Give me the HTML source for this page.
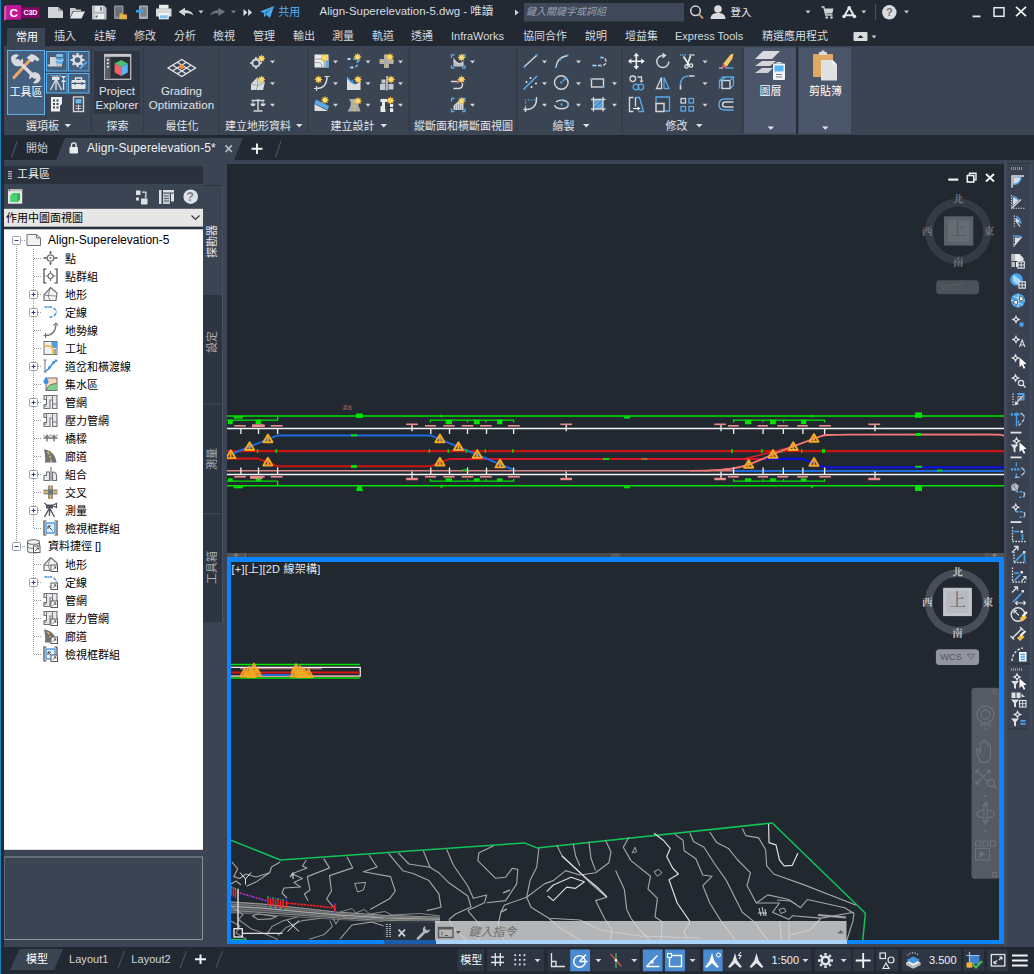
<!DOCTYPE html>
<html lang="zh-Hant">
<head>
<meta charset="utf-8">
<title>Align-Superelevation-5.dwg</title>
<style>
*{box-sizing:border-box;margin:0;padding:0}
html,body{width:1034px;height:974px;overflow:hidden;background:#3b4453}
body{position:relative;font-family:"Liberation Sans","Noto Sans CJK TC",sans-serif;font-size:12px;color:#e4e7eb;line-height:1}
.abs{position:absolute}
svg{position:absolute;overflow:visible}
/* ---------- title bar ---------- */
#title{position:absolute;left:0;top:0;width:1034px;height:25px;background:#222933}
#menutabs{position:absolute;left:0;top:25px;width:1034px;height:22px;background:#222933}
#menutabs span{position:absolute;top:6px;white-space:nowrap;color:#d5d9df;font-size:11px}
#menutabs .act{left:7px;top:3px;width:38px;height:19px;background:#3b4453;color:#fff}
/* ---------- ribbon ---------- */
#ribbon{position:absolute;left:0;top:46px;width:1034px;height:89px;background:#3b4453}
.rt{position:absolute;font-size:11px;color:#e1e4e9;white-space:nowrap;line-height:12px}
/* ---------- doc tabs ---------- */
#doctabs{position:absolute;left:0;top:135px;width:1034px;height:25px;background:#222933}
/* ---------- tool space ---------- */
#ts{position:absolute;left:0;top:160px;width:227px;height:787px;background:#3b4453}
.tl{position:absolute;font-size:11px;color:#000;white-space:nowrap;line-height:13px}
.vt{position:absolute;left:205.500px;font-size:11px;color:#aab0b9;white-space:nowrap;transform-origin:0 0;transform:rotate(-90deg);line-height:12px}
/* ---------- viewports ---------- */
#vp1{position:absolute;left:227px;top:164px;width:776.500px;height:389px;background:#212830;overflow:hidden}
#vp2{position:absolute;left:227px;top:557px;width:777px;height:387px;background:#212830;overflow:hidden;border:solid #0a84ff;border-width:5px 5px 4px 4px}
.cl{position:absolute;font-family:"Liberation Serif","Noto Serif CJK SC",serif;font-size:10.500px;font-weight:bold;color:#6d737a;line-height:12px;white-space:nowrap}
/* ---------- right toolbar ---------- */
#rt{position:absolute;left:1004px;top:160px;width:30px;height:787px;background:#3b4453}
/* ---------- status bar ---------- */
#status{position:absolute;left:0;top:947px;width:1034px;height:27px;background:#222933}
#split{position:absolute;left:227px;top:552.500px;width:776.500px;height:4.500px;background:#4a4949}
#cmdstrip{position:absolute;left:383.500px;top:940px;width:463px;height:4px;background:linear-gradient(90deg,#1c5cae 0,#1c5cae 51.500px,#a9d3f9 51.500px,#a9d3f9 100%)}
#ledge{position:absolute;left:0;top:0;width:3.600px;height:974px;background:linear-gradient(90deg,#1583bd 0,#1583bd 1.200px,#222933 1.200px,#222933 100%)}
</style>
</head>
<body>
<div id="title">
<svg width="1034" height="25" viewBox="0 0 1034 25">
<!-- logo -->
<polygon points="3.100,7.300 6.800,5.100 6.800,19.400 3.100,21" fill="#d94cb2"/>
<rect x="6.800" y="5.100" width="14.500" height="14.500" fill="#c5149a"/>
<rect x="21.300" y="7.300" width="18.100" height="10.600" fill="#870768"/>
<text x="13.800" y="16.900" font-size="11.800" font-weight="bold" fill="#fff" text-anchor="middle" font-family="Liberation Sans, sans-serif">C</text>
<text x="30.400" y="15" font-size="7" font-weight="bold" fill="#fff" text-anchor="middle" font-family="Liberation Sans, sans-serif">C3D</text>
<!-- new -->
<path d="M48 7h10l5 4v7H48z" fill="#d2d4d6"/><path d="M58 7v4h5z" fill="#9a9da2"/>
<!-- open -->
<path d="M70 8h5l1.5 1.5H81V11h-8l-3 6.5z" fill="#c8cacd"/><path d="M73.500 11.500H85l-3.500 7H70z" fill="#e4e5e7"/>
<!-- save -->
<path d="M92 5.500h12l2.500 2.500V19.500H92z" fill="#b9bcc0"/><rect x="95" y="6" width="8" height="5.500" fill="#e8e9ea"/><rect x="100" y="7" width="2" height="3.500" fill="#7c8087"/><rect x="94.500" y="14" width="9.500" height="5" fill="#eceded"/><rect x="95.500" y="15.500" width="2" height="2" fill="#555a62"/>
<!-- save mobile -->
<rect x="114" y="5.500" width="9.500" height="13.500" rx="1" fill="#8d9096"/><rect x="115.500" y="7" width="6.500" height="9.500" fill="#6a6e75"/><path d="M119.500 13.500h3l.8.900h3.700v4.800h-7.500z" fill="#e5b04a"/>
<!-- open mobile -->
<rect x="139" y="5.500" width="9" height="13.500" rx="1" fill="#a9acb1"/><rect x="140.300" y="7" width="6.400" height="9.500" fill="#7d8188"/><path d="M136 10h4V8l3.500 3.200L140 14.500v-2h-4z" fill="#3fa0e6"/>
<!-- print -->
<rect x="159" y="4.800" width="9.500" height="4" fill="#eeeeef"/><path d="M156 8.500h15.500v8H156z" fill="#d7d9db"/><rect x="158.800" y="13" width="10" height="6.300" fill="#f4f4f5"/><rect x="160" y="15.300" width="7.600" height="3" fill="#7fc2f2"/>
<!-- undo -->
<path d="M178.500 11.800l6.500-4v2.500c4 0 7.500 1.500 8.300 5.200-2-2-4.500-2.400-8.300-2.200v2.600z" fill="#d4d6d9"/>
<path d="M198.500 10.500h5l-2.500 3z" fill="#c8cbcf"/>
<!-- redo -->
<path d="M225 11.800l-6.500-4v2.500c-4 0-7.500 1.500-8.300 5.200 2-2 4.500-2.400 8.300-2.200v2.600z" fill="#6e737b"/>
<path d="M231 10.500h5l-2.500 3z" fill="#7d828a"/>
<!-- more -->
<path d="M243.500 9l3.800 3.500-3.800 3.500zM248.200 9l3.800 3.500-3.800 3.500z" fill="#e0e2e5"/>
<!-- share -->
<path d="M260 11.500L274 6l-4 12-3.800-3.300-2 2.600-.4-4.300z" fill="#4aa9ea"/><path d="M263.800 13l7.500-5-5 6.500z" fill="#2b7fbf"/>
<!-- arrow before search -->
<path d="M515 9.500l3.800 3-3.800 3z" fill="#d0d3d7"/>
<rect x="524" y="3" width="160" height="18.500" fill="#3f4859"/>
<!-- magnifier -->
<circle cx="695.500" cy="10.800" r="4.800" fill="none" stroke="#d6d8db" stroke-width="1.500"/><path d="M699 14.300l4 4" stroke="#c9a26a" stroke-width="1.800"/>
<!-- user -->
<circle cx="718" cy="9" r="3.800" fill="#d9dbde"/><path d="M710.500 19c0-4.500 3.500-6 7.500-6s7.500 1.500 7.500 6z" fill="#d9dbde"/>
<path d="M805.500 10.500h5l-2.500 3z" fill="#c8cbcf"/>
<!-- cart -->
<path d="M821.500 7h2.300l2 8h6.700" fill="none" stroke="#d0d3d6" stroke-width="1.300"/><path d="M824.500 8.500h9l-1.200 5h-6.600z" fill="#d0d3d6"/><circle cx="826.800" cy="17.500" r="1.300" fill="#d0d3d6"/><circle cx="831.500" cy="17.500" r="1.300" fill="#d0d3d6"/>
<!-- A app -->
<path d="M849.200 7.500l-5.400 9.500M849.200 7.500l5.400 9.500M845 15.200h8.500" stroke="#e3e5e8" stroke-width="2" fill="none"/><circle cx="849.200" cy="7.800" r="1.800" fill="#e3e5e8"/><circle cx="844" cy="16.500" r="1.800" fill="#e3e5e8"/><circle cx="854.500" cy="16.500" r="1.800" fill="#e3e5e8"/>
<path d="M861.300 10.500h5l-2.500 3z" fill="#c8cbcf"/>
<rect x="875" y="4" width="1" height="16" fill="#4a5261"/>
<circle cx="889.300" cy="12.300" r="7.200" fill="#d9dbde"/>
<text x="889.300" y="16.300" font-size="11" font-weight="bold" fill="#6a707a" text-anchor="middle" font-family="Liberation Sans, sans-serif">?</text>
<path d="M904 10.500h5l-2.500 3z" fill="#c8cbcf"/>
<!-- window buttons -->
<rect x="972.500" y="15.500" width="8" height="1.800" fill="#e6e8ea"/>
<rect x="994" y="7.700" width="10" height="8.600" fill="none" stroke="#e6e8ea" stroke-width="1.500"/>
<path d="M1016 6.800l10 9.400M1026 6.800l-10 9.400" stroke="#f2f3f4" stroke-width="1.700"/>
</svg>
<span class="abs" style="left:278.300px;top:6.800px;color:#58aff0;font-size:11px;white-space:nowrap">共用</span>
<span class="abs" style="left:319.500px;top:6px;color:#d9dce1;font-size:11.500px;white-space:nowrap">Align-Superelevation-5.dwg - 唯讀</span>
<span class="abs" style="left:526px;top:7px;color:#98a1ae;font-size:10px;font-style:italic;white-space:nowrap">鍵入關鍵字或詞組</span>
<span class="abs" style="left:730.500px;top:6.500px;color:#e4e6e9;font-size:10.500px;white-space:nowrap">登入</span>
</div>
<div id="menutabs">
<span class="act"><i style="position:absolute;left:9px;top:3.500px;font-style:normal">常用</i></span>
<span style="left:54px">插入</span>
<span style="left:94px">註解</span>
<span style="left:134px">修改</span>
<span style="left:174px">分析</span>
<span style="left:213px">檢視</span>
<span style="left:253px">管理</span>
<span style="left:293px">輸出</span>
<span style="left:332px">測量</span>
<span style="left:372px">軌道</span>
<span style="left:411px">透通</span>
<span style="left:451px">InfraWorks</span>
<span style="left:523px">協同合作</span>
<span style="left:585px">說明</span>
<span style="left:625px">增益集</span>
<span style="left:675px">Express Tools</span>
<span style="left:762px">精選應用程式</span>
<svg width="30" height="12" style="left:852px;top:6px" viewBox="0 0 30 12"><rect x="1.500" y="1" width="14" height="9" rx="1" fill="#d9dbde"/><path d="M5.500 7l3-3 3 3z" fill="#222933"/><path d="M19.500 4.500h5l-2.500 3z" fill="#c8cbcf"/></svg>
</div>
<div id="ribbon">
<svg width="1034" height="88" viewBox="0 46 1034 88" style="left:0;top:0">
<rect x="90.8" y="48" width="1.400" height="85" fill="#333b48"/>
<rect x="142.8" y="48" width="1.400" height="85" fill="#333b48"/>
<rect x="218.3" y="48" width="1.400" height="85" fill="#333b48"/>
<rect x="307.3" y="48" width="1.400" height="85" fill="#333b48"/>
<rect x="408.8" y="48" width="1.400" height="85" fill="#333b48"/>
<rect x="515.8" y="48" width="1.400" height="85" fill="#333b48"/>
<rect x="621.3" y="48" width="1.400" height="85" fill="#333b48"/>
<rect x="741.8" y="48" width="1.400" height="85" fill="#333b48"/>
<rect x="7.500" y="50.500" width="37" height="64" fill="#44607e" stroke="#5db2ef" stroke-width="1"/>
<path d="M14 77.500L29 61" stroke="#f0a562" stroke-width="3.200" stroke-linecap="round"/>
<path d="M26.500 57.500l5-3.500c3 .5 6 2.500 8 5.500l-2 2-2.500-2-3 3z" fill="#d8dadd"/>
<path d="M17.500 60.500L34.500 77" stroke="#d8dadd" stroke-width="3.400" stroke-linecap="round"/>
<path d="M11.500 56.500c2-2.500 5.500-3 7.500-1.500l-3.500 3.500 1 2.500 2.500 1 3.500-3.500c1.500 2.500.5 5.500-1.500 7-2.500 1.500-5.500 1-7.500-1-2.500-2.500-3-6-2-8z" fill="#d8dadd"/>
<path d="M40 80.500c-1.500 2.500-4.500 3.500-7 2.500l3-3.500-1-2.500-2.500-.5-3 3c-1-2.500 0-5 2-6.500 2.500-1.500 5.500-1 7.500 1 1.500 2 2 4.500 1 6.500z" fill="#d8dadd"/>
<rect x="46.5" y="51.5" width="20.500" height="19.500" fill="#44607e" stroke="#5db2ef" stroke-width="1"/>
<rect x="68.5" y="51.5" width="20.500" height="19.500" fill="#44607e" stroke="#5db2ef" stroke-width="1"/>
<rect x="46.5" y="73.5" width="20.500" height="19.500" fill="#44607e" stroke="#5db2ef" stroke-width="1"/>
<rect x="68.5" y="73.5" width="20.500" height="19.500" fill="#44607e" stroke="#5db2ef" stroke-width="1"/>
<path d="M50 57h6v9.500h-7c-1 0-1.500-1-1.500-2h2.500z" fill="#d3d5d8"/><path d="M56 60h6v6.500h-6z" fill="#c3c5c9"/>
<ellipse cx="59.500" cy="55.500" rx="3.800" ry="1.700" fill="#7ec0ee"/><path d="M55.700 56.500v5.500c0 1 1.700 1.800 3.800 1.800s3.800-.8 3.800-1.800v-5.500c0 1-1.700 1.800-3.800 1.800s-3.800-.8-3.800-1.800z" fill="#5aa9e6"/><path d="M55.700 59.300c0 1 1.700 1.800 3.800 1.800s3.800-.8 3.800-1.800" stroke="#dff0fb" stroke-width=".8" fill="none"/>
<circle cx="77.500" cy="60" r="4" fill="none" stroke="#dcdee1" stroke-width="2.400"/>
<g stroke="#dcdee1" stroke-width="2.200"><path d="M77.500 53v2.500M77.500 64.500v2.500M70.500 60h2.500M82 60h2.500M72.600 55.100l1.700 1.700M80.700 63.200l1.700 1.700M72.600 64.900l1.700-1.700M80.700 56.800l1.700-1.700"/></g>
<path d="M80.500 68l5.500-5.500" stroke="#55a7e6" stroke-width="2.200" stroke-linecap="round"/>
<path d="M56 79l-5.500 11M56 79l5.500 11M56 79v11" stroke="#d6d8db" stroke-width="1.400" fill="none"/><rect x="52" y="76.500" width="7.500" height="3.500" fill="#e2e4e6"/><path d="M50.500 75.500h12" stroke="#7ec0ee" stroke-width="1" stroke-dasharray="1.500 1.500"/><path d="M63.500 80v10" stroke="#d6d8db" stroke-width="1.400"/><path d="M61 76h5l-2.500 3z M61 82h5l-2.500-3z" fill="#e2e4e6"/>
<rect x="71.500" y="80" width="14" height="9" rx="1" fill="#e4e6e8"/><path d="M75.500 80v-2h6v2" fill="none" stroke="#e4e6e8" stroke-width="1.400"/><rect x="71.500" y="82.800" width="14" height="1.200" fill="#44607e"/><circle cx="75" cy="83.500" r="1.300" fill="#44607e"/><circle cx="82" cy="83.500" r="1.300" fill="#44607e"/>
<path d="M51 97h11v7l-2 1.500v6H51z" fill="#eeeff0"/><g fill="#3b4453"><rect x="53" y="99.500" width="2" height="2"/><rect x="56.500" y="99.500" width="2" height="2"/><rect x="53" y="103" width="2" height="2"/><rect x="56.500" y="103" width="2" height="2"/><rect x="53" y="106.500" width="2" height="2"/><rect x="56.500" y="106.500" width="2" height="2"/></g>
<rect x="73.500" y="97" width="10" height="14.500" fill="none" stroke="#d3d5d8" stroke-width="1.400"/><rect x="75.500" y="99" width="6" height="4.500" fill="#6cb8ee"/><path d="M75.500 106h6M75.500 108.500h6M78.500 104.500v6" stroke="#d3d5d8" stroke-width="1"/>
<rect x="94" y="51" width="46" height="63" fill="#2e3643"/>
<rect x="104.700" y="54.500" width="26" height="24.800" fill="#2a2f38" stroke="#b9bbbe" stroke-width="1.300"/><rect x="104.700" y="54.500" width="26" height="2.300" fill="#c9cbce"/><rect x="105.500" y="57" width="5" height="21.500" fill="#5a5e66"/><rect x="107" y="59" width="1.600" height="1.600" fill="#fff"/><rect x="107" y="62.500" width="1.600" height="1.600" fill="#fff"/><rect x="107" y="66" width="1.600" height="1.600" fill="#fff"/>
<polygon points="121.200,60 127.800,63.500 121.200,67 114.600,63.500" fill="#4cc26a"/><polygon points="114.600,63.500 121.200,67 121.200,76 114.600,72.500" fill="#f0606a"/><polygon points="127.800,63.500 121.200,67 121.200,76 127.800,72.500" fill="#55b4f5"/>
<g stroke="#e8e9eb" stroke-width="1.300" fill="none"><polygon points="181.800,59.500 195.500,68 181.800,76.500 168,68"/><path d="M177.200 62.300l13.700 8.500M172.600 65.200l13.700 8.500M186.400 62.300l-13.700 8.500M191 65.200l-13.700 8.500"/></g><path d="M179.300 67.700c0-2 1.200-3.300 2.500-3.300s2.500 1.300 2.500 3.300l-2.500 1.600z" fill="#f58a2c"/>
<circle cx="256" cy="63" r="3.600" fill="none" stroke="#d6d8db" stroke-width="2"/><path d="M256 57v3M256 66v3M250 63h3M259 63h3" stroke="#d6d8db" stroke-width="1.600"/><polygon points="261.5,54.2 262.4,56.3 264.5,55.5 263.7,57.6 265.8,58.5 263.7,59.4 264.5,61.5 262.4,60.7 261.5,62.8 260.6,60.7 258.5,61.5 259.3,59.4 257.2,58.5 259.3,57.6 258.5,55.5 260.6,56.3" fill="#f1bf3e"/><circle cx="261.5" cy="58.5" r="2.1" fill="#f9dc7c"/>
<polygon points="251,84 257,77.500 265,82 263,90 251,90" fill="#d9dbde"/><path d="M251 84l7 1.500 7-3.500M258 85.500l-2 4.500M257 77.500l1 8" stroke="#8e9299" stroke-width=".8" fill="none"/><polygon points="261.5,75.2 262.4,77.3 264.5,76.5 263.7,78.6 265.8,79.5 263.7,80.4 264.5,82.5 262.4,81.7 261.5,83.8 260.6,81.7 258.5,82.5 259.3,80.4 257.2,79.5 259.3,78.6 258.5,76.5 260.6,77.3" fill="#f1bf3e"/><circle cx="261.5" cy="79.5" r="2.1" fill="#f9dc7c"/>
<path d="M258 99v11M253.500 111h9M251.500 100.500h13" stroke="#d6d8db" stroke-width="1.500" fill="none"/><path d="M250.500 103.500h5c0 1.800-1 2.800-2.500 2.800s-2.500-1-2.500-2.800zM260.500 103.500h5c0 1.800-1 2.800-2.500 2.800s-2.500-1-2.500-2.800z" fill="#d6d8db"/><path d="M253 100.500v3M263 100.500v3" stroke="#d6d8db" stroke-width=".9"/>
<path d="M270.0 60.5h5l-2.500 3z" fill="#cdd1d6"/>
<path d="M270.0 82.2h5l-2.500 3z" fill="#cdd1d6"/>
<path d="M270.0 103.7h5l-2.500 3z" fill="#cdd1d6"/>
<rect x="314.500" y="54.500" width="14" height="13" fill="#e9eaec"/><path d="M314.500 59h6c3 0 4 2 4 5v3.500" stroke="#9da1a7" stroke-width="1.200" fill="none"/><path d="M314.500 62.500h4c2.500 0 3.500 1.500 3.500 5" stroke="#9da1a7" stroke-width="1" fill="none"/><rect x="325.500" y="60" width="3" height="7.500" fill="#5aa9e6"/><polygon points="324.5,53.7 325.4,55.8 327.5,55.0 326.7,57.1 328.8,58.0 326.7,58.9 327.5,61.0 325.4,60.2 324.5,62.3 323.6,60.2 321.5,61.0 322.3,58.9 320.2,58.0 322.3,57.1 321.5,55.0 323.6,55.8" fill="#f1bf3e"/><circle cx="324.5" cy="58" r="2.1" fill="#f9dc7c"/>
<path d="M316 88.500c7 0 11-4 11-12" stroke="#d6d8db" stroke-width="1.500" fill="none"/><path d="M316.500 86v5M314 88.500h5M324.500 76.500h5" stroke="#d6d8db" stroke-width="1.200"/><polygon points="318.5,75.2 319.4,77.3 321.5,76.5 320.7,78.6 322.8,79.5 320.7,80.4 321.5,82.5 319.4,81.7 318.5,83.8 317.6,81.7 315.5,82.5 316.3,80.4 314.2,79.5 316.3,78.6 315.5,76.5 317.6,77.3" fill="#f1bf3e"/><circle cx="318.5" cy="79.5" r="2.1" fill="#f9dc7c"/>
<polygon points="314.500,104 314.500,111 328,111" fill="#dcdee1"/><polygon points="316,99.500 329,106 327.500,110 314.500,103.500" fill="#5aa9e6"/><polygon points="325.0,95.7 325.9,97.8 328.0,97.0 327.2,99.1 329.3,100.0 327.2,100.9 328.0,103.0 325.9,102.2 325.0,104.3 324.1,102.2 322.0,103.0 322.8,100.9 320.7,100.0 322.8,99.1 322.0,97.0 324.1,97.8" fill="#f1bf3e"/><circle cx="325" cy="100" r="2.1" fill="#f9dc7c"/>
<path d="M347 59h4M353 59h3M356.500 62.500l3-2M349.500 67.500h4M355 67l3-2" stroke="#5aa9e6" stroke-width="1.600" fill="none"/><circle cx="349" cy="59" r=".9" fill="#fff"/><circle cx="352" cy="67.500" r=".9" fill="#fff"/><polygon points="357.5,52.7 358.4,54.8 360.5,54.0 359.7,56.1 361.8,57.0 359.7,57.9 360.5,60.0 358.4,59.2 357.5,61.3 356.6,59.2 354.5,60.0 355.3,57.9 353.2,57.0 355.3,56.1 354.5,54.0 356.6,54.8" fill="#f1bf3e"/><circle cx="357.5" cy="57" r="2.1" fill="#f9dc7c"/>
<path d="M347 77.500c3 4 5 6 8 6.500 2 .3 4-1.500 5.500-3.500V90H347z" fill="#dcdee1"/><path d="M347 77c3 4 5 6.500 8.500 7" stroke="#3f97dc" stroke-width="1.400" fill="none"/><circle cx="352.500" cy="81" r="1" fill="#3f97dc"/><polygon points="358.0,75.2 358.9,77.3 361.0,76.5 360.2,78.6 362.3,79.5 360.2,80.4 361.0,82.5 358.9,81.7 358.0,83.8 357.1,81.7 355.0,82.5 355.8,80.4 353.7,79.5 355.8,78.6 355.0,76.5 357.1,77.3" fill="#f1bf3e"/><circle cx="358" cy="79.5" r="2.1" fill="#f9dc7c"/>
<path d="M349 99c2.500 3 2.500 7-1.500 12.500h13c-1-5-3.500-7-3-12.500z" fill="#a9acb1"/><path d="M353 101c1.500 3 2 6 1 10" stroke="#f3c544" stroke-width="1.500" stroke-dasharray="2.500 1.800" fill="none"/><polygon points="358.0,96.7 358.9,98.8 361.0,98.0 360.2,100.1 362.3,101.0 360.2,101.9 361.0,104.0 358.9,103.2 358.0,105.3 357.1,103.2 355.0,104.0 355.8,101.9 353.7,101.0 355.8,100.1 355.0,98.0 357.1,98.8" fill="#f1bf3e"/><circle cx="358" cy="101" r="2.1" fill="#f9dc7c"/>
<path d="M384 54.500h5v4.500h4.500v5H389v4h-5v-4h-4.500v-5h4.500z" fill="#a9acb1"/><path d="M386.500 55v3.500M386.500 64.500v3.500" stroke="#f3c544" stroke-width="1.200" stroke-dasharray="2 1.200"/><path d="M380 61.500h4M389.500 61.500h4" stroke="#f3c544" stroke-width="1.200"/><polygon points="390.0,52.7 390.9,54.8 393.0,54.0 392.2,56.1 394.3,57.0 392.2,57.9 393.0,60.0 390.9,59.2 390.0,61.3 389.1,59.2 387.0,60.0 387.8,57.9 385.7,57.0 387.8,56.1 387.0,54.0 389.1,54.8" fill="#f1bf3e"/><circle cx="390" cy="57" r="2.1" fill="#f9dc7c"/>
<path d="M380 84h5.500v6H380zM381.500 79.500h4v4h-4zM388.500 84h5v5.500h-5z" fill="#c5c8cc"/><path d="M387 76v14.500" stroke="#eceded" stroke-width="1.300"/><polygon points="391.0,75.2 391.9,77.3 394.0,76.5 393.2,78.6 395.3,79.5 393.2,80.4 394.0,82.5 391.9,81.7 391.0,83.8 390.1,81.7 388.0,82.5 388.8,80.4 386.7,79.5 388.8,78.6 388.0,76.5 390.1,77.3" fill="#f1bf3e"/><circle cx="391" cy="79.5" r="2.1" fill="#f9dc7c"/>
<path d="M380.500 99h7v3h-2.500v7h-4.500v-3h1.500v-4h-1.500zM380.500 109h5v3h-5z" fill="#e9eaec"/><rect x="390" y="104" width="3.200" height="8" fill="#e9eaec"/><rect x="389.500" y="107" width="4.200" height="1.200" fill="#3b4453"/><polygon points="390.5,96.2 391.4,98.3 393.5,97.5 392.7,99.6 394.8,100.5 392.7,101.4 393.5,103.5 391.4,102.7 390.5,104.8 389.6,102.7 387.5,103.5 388.3,101.4 386.2,100.5 388.3,99.6 387.5,97.5 389.6,98.3" fill="#f1bf3e"/><circle cx="390.5" cy="100.5" r="2.1" fill="#f9dc7c"/>
<path d="M333.0 60.5h5l-2.500 3z" fill="#cdd1d6"/>
<path d="M365.5 60.5h5l-2.500 3z" fill="#cdd1d6"/>
<path d="M398.0 60.5h5l-2.500 3z" fill="#cdd1d6"/>
<path d="M333.0 82.2h5l-2.500 3z" fill="#cdd1d6"/>
<path d="M365.5 82.2h5l-2.500 3z" fill="#cdd1d6"/>
<path d="M398.0 82.2h5l-2.500 3z" fill="#cdd1d6"/>
<path d="M333.0 103.7h5l-2.500 3z" fill="#cdd1d6"/>
<path d="M365.5 103.7h5l-2.500 3z" fill="#cdd1d6"/>
<path d="M398.0 103.7h5l-2.500 3z" fill="#cdd1d6"/>
<path d="M451.5 58v-3h3M462 55h3v3M451.5 65v3h3M462 68h3v-3" stroke="#5aa9e6" stroke-width="1.300" fill="none"/><path d="M453.500 57.500c2 3.500 4 5.500 6.500 5.500 1.500 0 2.500-1 3.500-2.500V66.500h-10z" fill="#d3d6da"/><path d="M455 62v4.500M457 63.500v3M459 64v2.500M461 63.500v3" stroke="#8e9299" stroke-width=".7"/><polygon points="461.5,53.2 462.4,55.3 464.5,54.5 463.7,56.6 465.8,57.5 463.7,58.4 464.5,60.5 462.4,59.7 461.5,61.8 460.6,59.7 458.5,60.5 459.3,58.4 457.2,57.5 459.3,56.6 458.5,54.5 460.6,55.3" fill="#f1bf3e"/><circle cx="461.5" cy="57.5" r="2.1" fill="#f9dc7c"/>
<path d="M451 81.500h8M453.500 88.500h4.500c3 0 4.500-1.500 4.500-4v-1.500" stroke="#d6d8db" stroke-width="1.400" fill="none"/><path d="M458.500 79.500l-1 4" stroke="#e0604f" stroke-width="1.600"/><polygon points="461.5,75.2 462.4,77.3 464.5,76.5 463.7,78.6 465.8,79.5 463.7,80.4 464.5,82.5 462.4,81.7 461.5,83.8 460.6,81.7 458.5,82.5 459.3,80.4 457.2,79.5 459.3,78.6 458.5,76.5 460.6,77.3" fill="#f1bf3e"/><circle cx="461.5" cy="79.5" r="2.1" fill="#f9dc7c"/>
<path d="M451.5 101.5v-3h3M462 98.5h3v3M451.5 108.5v3h3M462 111.5h3v-3" stroke="#5aa9e6" stroke-width="1.300" fill="none"/><path d="M453.500 105.500l4-3.500c2-1 4 0 6 2v6h-10z" fill="#d3d6da"/><path d="M455.500 105v5M457.500 104v6M459.500 104v6M461.500 105v5" stroke="#8e9299" stroke-width=".7"/><polygon points="461.5,96.7 462.4,98.8 464.5,98.0 463.7,100.1 465.8,101.0 463.7,101.9 464.5,104.0 462.4,103.2 461.5,105.3 460.6,103.2 458.5,104.0 459.3,101.9 457.2,101.0 459.3,100.1 458.5,98.0 460.6,98.8" fill="#f1bf3e"/><circle cx="461.5" cy="101" r="2.1" fill="#f9dc7c"/>
<path d="M470.0 60.5h5l-2.500 3z" fill="#cdd1d6"/>
<path d="M470.0 103.7h5l-2.500 3z" fill="#cdd1d6"/>
<path d="M524.500 66.500L536.500 55.500" stroke="#d3d6da" stroke-width="1.400"/><rect x="523.500" y="65.700" width="2" height="2" fill="#5aa9e6"/><rect x="535.700" y="54.300" width="2" height="2" fill="#5aa9e6"/>
<path d="M556 67c.5-6 4-10 11.500-11.500" stroke="#d3d6da" stroke-width="1.400" fill="none"/><rect x="555" y="66" width="2" height="2" fill="#5aa9e6"/><rect x="559" y="58.500" width="2" height="2" fill="#5aa9e6"/><rect x="566.500" y="54.500" width="2" height="2" fill="#5aa9e6"/>
<path d="M593 65.500h8c3.500 0 5-1.500 5-4s-1.500-4-4.500-4" stroke="#d3d6da" stroke-width="1.400" fill="none" stroke-dasharray="3.500 1.500"/><rect x="592" y="64.500" width="2" height="2" fill="#5aa9e6"/><rect x="600" y="64.500" width="2" height="2" fill="#5aa9e6"/><rect x="600" y="56.500" width="2" height="2" fill="#5aa9e6"/>
<path d="M523.500 89.500L537 76" stroke="#5aa9e6" stroke-width="1.400"/><g fill="#eceded"><circle cx="526.500" cy="82" r="1"/><circle cx="530.500" cy="78" r="1"/><circle cx="531.500" cy="87" r="1"/><circle cx="536" cy="83.500" r="1"/></g>
<circle cx="561.300" cy="82.500" r="6.800" fill="none" stroke="#d3d6da" stroke-width="1.400"/><rect x="560.300" y="81.500" width="2" height="2" fill="#5aa9e6"/><path d="M562.500 81.500l3-3M563.500 78h2.500v2.500" stroke="#5aa9e6" stroke-width="1.100" fill="none"/>
<rect x="591.500" y="79" width="12" height="8" fill="none" stroke="#d3d6da" stroke-width="1.400"/><rect x="590.500" y="78" width="2" height="2" fill="#5aa9e6"/><rect x="602.500" y="86" width="2" height="2" fill="#5aa9e6"/>
<path d="M525.500 109.500v-9.500h10" stroke="#5aa9e6" stroke-width="1.200" stroke-dasharray="1.500 1.500" fill="none"/><path d="M523.500 109.500h3c6 0 10-4 10-10v-2.500M525.500 107v5" stroke="#d3d6da" stroke-width="1.400" fill="none"/>
<ellipse cx="561.500" cy="104.500" rx="7" ry="4.300" fill="none" stroke="#d3d6da" stroke-width="1.400" stroke-dasharray="17 4"/><rect x="560.500" y="103.500" width="2" height="2" fill="#5aa9e6"/><rect x="560.500" y="99.200" width="2" height="2" fill="#5aa9e6"/><rect x="567" y="103.500" width="2" height="2" fill="#5aa9e6"/>
<rect x="593.500" y="99.500" width="9.500" height="9.500" fill="#4a8fc9"/><path d="M594 106l6-6M596.500 108.500l6-6M594 102.500l3-3M599.500 108.500l3-3" stroke="#9fd0f5" stroke-width=".8"/><path d="M591 99.500h14.500M591 109h14.500M593.500 97v14.500M603 97v14.500" stroke="#d3d6da" stroke-width="1.300"/>
<path d="M542.0 60.5h5l-2.500 3z" fill="#cdd1d6"/>
<path d="M576.0 60.5h5l-2.500 3z" fill="#cdd1d6"/>
<path d="M542.0 82.2h5l-2.500 3z" fill="#cdd1d6"/>
<path d="M576.0 82.2h5l-2.500 3z" fill="#cdd1d6"/>
<path d="M542.0 103.7h5l-2.500 3z" fill="#cdd1d6"/>
<path d="M576.0 103.7h5l-2.500 3z" fill="#cdd1d6"/>
<path d="M612.0 82.2h5l-2.500 3z" fill="#cdd1d6"/>
<path d="M612.0 103.7h5l-2.500 3z" fill="#cdd1d6"/>
<path d="M636.300 54v14.500M629 61.200h14.500" stroke="#f2f3f4" stroke-width="1.600"/><path d="M636.300 52.800l2.800 3.500h-5.600zM636.300 69.600l2.800-3.500h-5.600zM627.900 61.200l3.500-2.800v5.600zM644.700 61.200l-3.500-2.800v5.600z" fill="#f2f3f4"/>
<path d="M662.800 55.500a6 6 0 1 0 6 6" stroke="#d3d6da" stroke-width="1.500" fill="none"/><path d="M662.500 52.500l4 3-4 3z" fill="#d3d6da"/>
<path d="M680 55h6" stroke="#5aa9e6" stroke-width="1.300" stroke-dasharray="1.300 1"/><path d="M689 55h5.500" stroke="#d3d6da" stroke-width="1.300"/><path d="M683.500 56.500l6 9M690.500 56l-3.500 9.500" stroke="#eceded" stroke-width="1.700"/><circle cx="686.500" cy="66.500" r="1.700" fill="none" stroke="#eceded" stroke-width="1.200"/><circle cx="691" cy="65.500" r="1.700" fill="none" stroke="#eceded" stroke-width="1.200"/>
<polygon points="723,64 730.500,54.500 733.500,53.500 732.500,58.500 726.500,67" fill="#f3c868"/><polygon points="723,64 726.500,67 725,68.200 722,66.500" fill="#ef5362"/><path d="M719 68h4" stroke="#d3d6da" stroke-width="1.200"/><path d="M725.500 68h8" stroke="#5aa9e6" stroke-width="1.300"/>
<circle cx="632.800" cy="78.800" r="2.800" fill="none" stroke="#d3d6da" stroke-width="1.300"/><path d="M637.500 77h4v4" stroke="#d3d6da" stroke-width="1.300" fill="none"/><path d="M641.500 83l-2-2.500h4z" fill="#d3d6da"/><circle cx="636" cy="87" r="2.800" fill="none" stroke="#5aa9e6" stroke-width="1.300"/><circle cx="640.800" cy="87" r="2.800" fill="none" stroke="#5aa9e6" stroke-width="1.300"/>
<polygon points="661.500,77.500 661.500,88.500 656.500,88.500" fill="none" stroke="#d3d6da" stroke-width="1.300"/><polygon points="664,77.500 664,88.500 669,88.500" fill="none" stroke="#5aa9e6" stroke-width="1.300"/>
<path d="M680.500 89.500v-5c0-5 3-8.500 8-8.500" stroke="#5aa9e6" stroke-width="1.500" fill="none"/><path d="M680.500 89.500v-4M689 76h5.500" stroke="#d3d6da" stroke-width="1.500"/>
<path d="M719.500 88.500v-8l3.500-3.500h10.500v8l-3.500 3.500M719.500 80.500h3M730 88.500l3.500-3.500" stroke="#5aa9e6" stroke-width="1.300" fill="none"/><rect x="722" y="80.500" width="8" height="8" fill="none" stroke="#d3d6da" stroke-width="1.400"/><path d="M722 80.500l3-3M730 80.500l3-3" stroke="#5aa9e6" stroke-width="1.200"/>
<path d="M633.500 97.500h-4v14h4" stroke="#d3d6da" stroke-width="1.400" fill="none"/><path d="M635.500 97.500h4l4 14h-5" stroke="#5aa9e6" stroke-width="1.400" fill="none"/><path d="M635.500 97.500v9" stroke="#d3d6da" stroke-width="1.400"/><path d="M633 108.500h5.500" stroke="#f2f3f4" stroke-width="1.200"/><path d="M640.500 108.500l-3-2v4z" fill="#f2f3f4"/>
<path d="M656 104v-7h13.500v14H665" stroke="#5aa9e6" stroke-width="1.300" fill="none"/><rect x="656" y="103.500" width="8" height="8" fill="none" stroke="#d3d6da" stroke-width="1.500"/>
<rect x="681" y="98.500" width="4.500" height="4.500" fill="none" stroke="#d3d6da" stroke-width="1.300"/><rect x="689" y="98.500" width="4.500" height="4.500" fill="none" stroke="#5aa9e6" stroke-width="1.300"/><rect x="681" y="106.500" width="4.500" height="4.500" fill="none" stroke="#5aa9e6" stroke-width="1.300"/><rect x="689" y="106.500" width="4.500" height="4.500" fill="none" stroke="#5aa9e6" stroke-width="1.300"/>
<path d="M733.500 99h-9c-3.500 0-5.500 2.300-5.500 5.500s2 5.500 5.500 5.500h9" stroke="#5aa9e6" stroke-width="1.400" fill="none"/><path d="M733.500 102h-8c-2 0-3 1-3 2.500s1 2.500 3 2.500h8" stroke="#d3d6da" stroke-width="1.400" fill="none"/>
<path d="M702.5 60.5h5l-2.500 3z" fill="#cdd1d6"/>
<path d="M702.5 82.2h5l-2.500 3z" fill="#cdd1d6"/>
<path d="M702.5 103.7h5l-2.500 3z" fill="#cdd1d6"/>
<rect x="744" y="47.500" width="52" height="86" fill="#4b566a"/><rect x="796" y="47" width="2.500" height="87" fill="#262d38"/><rect x="798.500" y="47.500" width="52.500" height="86" fill="#4b566a"/>
<polygon points="763,51 780,51 772,59 755,59" fill="#d9dbde"/><polygon points="762,61 776,61 770,66 755,66" fill="#d3d5d8"/><polygon points="762,68 773,68 768,73 755,73" fill="#cfd1d4"/>
<rect x="773" y="63.500" width="12" height="16.500" rx="1" fill="#f2f3f4"/><rect x="774.500" y="65.500" width="9" height="6" fill="#58b3f5"/><path d="M776 74.500h6M776 77h6" stroke="#6b7078" stroke-width=".9"/><rect x="776.500" y="62" width="5" height="1.500" fill="#d9dbde"/>
<path d="M767.500 126.500h6.500l-3.250 3.300z" fill="#e4e6e9"/><path d="M822 126.500h6.500l-3.250 3.300z" fill="#e4e6e9"/>
<rect x="813" y="54" width="20" height="23" rx="1" fill="#e0a962"/><rect x="819" y="52" width="8" height="3" fill="#d9dbde"/><rect x="821.500" y="50.500" width="3" height="2" fill="#d9dbde"/><path d="M821 60h11.500l4.500 4.500V80.500H821z" fill="#dfe0e2"/><path d="M832.500 60v4.500h4.500z" fill="#f6f6f7"/>
<path d="M64.5 124h6.500l-3.250 3.500z" fill="#dfe3e8"/><path d="M296 124h6.500l-3.250 3.500z" fill="#dfe3e8"/><path d="M380.5 124h6.500l-3.250 3.500z" fill="#dfe3e8"/><path d="M583 124h6.500l-3.250 3.500z" fill="#dfe3e8"/><path d="M696 124h6.500l-3.250 3.500z" fill="#dfe3e8"/>
</svg>
<span class="rt" style="left:9.5px;top:39.5px;color:#fff">工具區</span>
<span class="rt" style="left:26px;top:74px;">選項板</span>
<span class="rt" style="left:94px;top:39px;width:46px;text-align:center;font-size:11.500px">Project</span>
<span class="rt" style="left:94px;top:52.5px;width:46px;text-align:center;font-size:11.500px">Explorer</span>
<span class="rt" style="left:106.5px;top:74px;">探索</span>
<span class="rt" style="left:144px;top:39px;width:75px;text-align:center;font-size:11.500px">Grading</span>
<span class="rt" style="left:144px;top:52.5px;width:75px;text-align:center;font-size:11.500px;letter-spacing:.15px">Optimization</span>
<span class="rt" style="left:165.5px;top:74px;">最佳化</span>
<span class="rt" style="left:225px;top:74px;">建立地形資料</span>
<span class="rt" style="left:330.5px;top:74px;">建立設計</span>
<span class="rt" style="left:414px;top:74px;">縱斷面和橫斷面視圖</span>
<span class="rt" style="left:552.5px;top:74px;">繪製</span>
<span class="rt" style="left:665.5px;top:74px;">修改</span>
<span class="rt" style="left:759.5px;top:38.5px;color:#fff">圖層</span>
<span class="rt" style="left:809px;top:38.5px;color:#fff">剪貼簿</span>
</div>
<div id="doctabs">
<svg width="1034" height="25" viewBox="0 135 1034 25" style="left:0;top:0">
<polygon points="56,160 65,138 243,138 234,160" fill="#3b4453"/>
<path d="M11.500 157.500l5.500-16" stroke="#4a5363" stroke-width="1.200"/>
<path d="M275.500 157l5.500-16" stroke="#4a5363" stroke-width="1.200"/>
<rect x="69.500" y="147" width="8.500" height="6.500" rx=".8" fill="#e9eaec"/><path d="M71.500 147v-1.800c0-1.400 1-2.300 2.300-2.300s2.300.9 2.300 2.300V147" fill="none" stroke="#e9eaec" stroke-width="1.400"/>
<path d="M225.500 145.300l6.300 6.700M231.800 145.300l-6.300 6.700" stroke="#b2b7be" stroke-width="1.800"/>
<path d="M251.500 148.700h11M257 143.500v10.500" stroke="#f2f3f4" stroke-width="1.900"/>
</svg>
<span class="abs" style="left:26px;top:7.500px;font-size:11px;color:#c9cdd3;white-space:nowrap">開始</span>
<span class="abs" style="left:87px;top:6.500px;font-size:12px;color:#f0f1f3;white-space:nowrap;letter-spacing:.12px">Align-Superelevation-5*</span>
</div>
<div id="ts">
<svg width="227" height="787" viewBox="0 160 227 787" style="left:0;top:0">
<rect x="3.500" y="166.300" width="199.500" height="17.500" fill="#2a313c"/>
<rect x="8" y="171.0" width="4" height="1.200" fill="#b4b9c0"/>
<rect x="8" y="173.3" width="4" height="1.200" fill="#b4b9c0"/>
<rect x="8" y="175.6" width="4" height="1.200" fill="#b4b9c0"/>
<rect x="8" y="177.9" width="4" height="1.200" fill="#b4b9c0"/>
<rect x="8" y="189" width="14.200" height="14.700" fill="#e8e8e8"/><rect x="8" y="189" width="14.200" height="2.200" fill="#bcbcbc"/><rect x="8.800" y="189.600" width="1.200" height="1.200" fill="#333"/><polygon points="10.500,195.500 13,193 20,193 20,199.500 17.500,202 10.500,202" fill="#3cc863"/><polygon points="10.500,195.500 17.500,195.500 17.500,202 10.500,202" fill="#48d472"/><polygon points="17.500,195.500 20,193 20,199.500 17.500,202" fill="#2fae50"/>
<g fill="#dfe1e4"><rect x="136" y="190.500" width="4.500" height="4.500"/><rect x="136" y="197.500" width="3" height="3"/><rect x="141" y="198.500" width="6.500" height="6" /><path d="M142 191.500h4.500v4.500h-1.300v-3.200H142z"/><path d="M144 196.500h3.300l-1.650 1.800z"/></g>
<g fill="#dfe1e4"><rect x="159" y="190" width="2.500" height="14"/><rect x="163" y="190" width="11" height="2.500"/><rect x="163" y="193.500" width="7" height="10.500" fill="#c4c7cb"/><rect x="171" y="193.500" width="3" height="8"/></g><path d="M164 196h5M164 198.500h5M164 201h5" stroke="#3b4453" stroke-width=".8"/>
<circle cx="190.700" cy="196.700" r="7.300" fill="#dfe1e4"/>
<rect x="3.500" y="208.800" width="199.500" height="18" fill="#e6e6e6"/><rect x="3.500" y="226.800" width="199.500" height="2.500" fill="#2a313c"/><path d="M191.500 215.500l4 4 4-4" stroke="#333" stroke-width="1.200" fill="none"/>
<rect x="3.500" y="229.300" width="199.500" height="620.500" fill="#fff"/>
<rect x="4" y="857" width="198.500" height="82.500" fill="#3b4453" stroke="#8c919a" stroke-width="1"/>
<rect x="203" y="185.500" width="19" height="436.500" fill="#2e3542"/>
<rect x="203" y="185.500" width="19" height="109.500" fill="#3b4453"/><path d="M203 185.500h18.500" stroke="#2c333f" stroke-width="1" fill="none"/>
<rect x="203" y="403.0" width="19" height="1.500" fill="#3b4453"/>
<rect x="203" y="513.0" width="19" height="1.500" fill="#3b4453"/>
<rect x="222" y="185.500" width="1" height="436.500" fill="#465061"/>
<path d="M16.500 246V546" stroke="#9a9a9a" stroke-width="1" stroke-dasharray="1 1"/>
<path d="M33.500 249V528" stroke="#9a9a9a" stroke-width="1" stroke-dasharray="1 1"/>
<path d="M33.500 555V654" stroke="#9a9a9a" stroke-width="1" stroke-dasharray="1 1"/>
<path d="M20 240.500h5" stroke="#9a9a9a" stroke-width="1" stroke-dasharray="1 1"/>
<rect x="12.5" y="236.5" width="8" height="8" fill="#fff" stroke="#9aa0a8" stroke-width="1" rx="1"/><path d="M14.5 240.5h4" stroke="#2b3f8f" stroke-width="1"/>
<path d="M27.0 234.5h9.500l4 3.500v7.500h-13.500z" fill="#f2f2f2" stroke="#6d7178" stroke-width="1"/><path d="M36.5 234.5v3.500h4" fill="none" stroke="#6d7178" stroke-width="1"/>
<path d="M34 258.500h8" stroke="#9a9a9a" stroke-width="1" stroke-dasharray="1 1"/>
<circle cx="50.5" cy="258" r="3.200" fill="none" stroke="#6d7178" stroke-width="1.300"/><circle cx="50.5" cy="258" r="1" fill="#6d7178"/><path d="M50.5 251v3.500M50.5 261.5v3.500M43.5 258h3.500M54.0 258h3.500" stroke="#6d7178" stroke-width="1.300"/><path d="M49.0 253l1.500-2 1.500 2zM49.0 263l1.500 2 1.500-2zM45.5 256.5l-2 1.500 2 1.500zM55.5 256.5l2 1.500-2 1.500z" fill="#6d7178"/>
<path d="M34 276.500h8" stroke="#9a9a9a" stroke-width="1" stroke-dasharray="1 1"/>
<path d="M46.5 269h-2.500v14h2.500M54.5 269h2.500v14h-2.500" stroke="#444" stroke-width="1.200" fill="none"/><circle cx="50.5" cy="276" r="2.500" fill="none" stroke="#6d7178" stroke-width="1.200"/><path d="M50.5 271v2.500M50.5 278.5v2.500M45.5 276h2.500M53.0 276h2.500" stroke="#6d7178" stroke-width="1.200"/>
<path d="M34 294.500h8" stroke="#9a9a9a" stroke-width="1" stroke-dasharray="1 1"/>
<rect x="29.5" y="290.5" width="8" height="8" fill="#fff" stroke="#9aa0a8" stroke-width="1" rx="1"/><path d="M31.5 294.5h4" stroke="#2b3f8f" stroke-width="1"/><path d="M33.5 292.5v4" stroke="#2b3f8f" stroke-width="1"/>
<polygon points="50.5,287.5 57.0,293 56.0,300.5 44.0,300.5 44.0,295" fill="#f4f4f4" stroke="#6d7178" stroke-width="1.200"/><path d="M50.5 287.5l-2.500 8 8 .5M44.0 295l4 .5 2 5" stroke="#6d7178" stroke-width=".8" fill="none"/>
<path d="M34 312.500h8" stroke="#9a9a9a" stroke-width="1" stroke-dasharray="1 1"/>
<rect x="29.5" y="308.5" width="8" height="8" fill="#fff" stroke="#9aa0a8" stroke-width="1" rx="1"/><path d="M31.5 312.5h4" stroke="#2b3f8f" stroke-width="1"/><path d="M33.5 310.5v4" stroke="#2b3f8f" stroke-width="1"/>
<path d="M44.5 307h3M49.5 307h2.500M53.5 308l2.500 2M56.0 313.5l-2 2.500M49.5 317h3" stroke="#3c8fd8" stroke-width="1.400" fill="none"/><circle cx="48.5" cy="307" r=".8" fill="#3c8fd8"/><circle cx="56.3" cy="312" r=".8" fill="#3c8fd8"/>
<path d="M34 330.500h8" stroke="#9a9a9a" stroke-width="1" stroke-dasharray="1 1"/>
<path d="M45.5 335.5c6 0 10-4 10.500-11" stroke="#6d7178" stroke-width="1.300" fill="none"/><path d="M45.5 333v5M43.5 335.5h4M53.5 325.5l2.500-2.500 2 2.500" stroke="#6d7178" stroke-width="1.100" fill="none"/>
<path d="M34 348.500h8" stroke="#9a9a9a" stroke-width="1" stroke-dasharray="1 1"/>
<rect x="44.0" y="341.5" width="13" height="13" fill="#f2f2f2" stroke="#6d7178" stroke-width="1"/><rect x="51.5" y="342" width="5.500" height="6" fill="#4d9fe4"/><path d="M44.5 346h4c3 0 4.500 2 4.500 5v3.500" stroke="#f0c24a" stroke-width="2.200" fill="none"/><path d="M55.0 349v5.500" stroke="#6d7178" stroke-width="1.200"/>
<path d="M34 366.500h8" stroke="#9a9a9a" stroke-width="1" stroke-dasharray="1 1"/>
<rect x="29.5" y="362.5" width="8" height="8" fill="#fff" stroke="#9aa0a8" stroke-width="1" rx="1"/><path d="M31.5 366.5h4" stroke="#2b3f8f" stroke-width="1"/><path d="M33.5 364.5v4" stroke="#2b3f8f" stroke-width="1"/>
<path d="M45.5 371c3-1 4-3 6-6s3-4 5.500-4.500" stroke="#3c8fd8" stroke-width="1.600" fill="none"/><path d="M45.0 360v12M43.5 360h3M43.5 372h3" stroke="#6d7178" stroke-width="1"/><circle cx="49.5" cy="367.5" r="1.300" fill="#3c8fd8"/><circle cx="53.5" cy="362.5" r="1.300" fill="#3c8fd8"/><path d="M55.5 359.5l1.500 2" stroke="#3c8fd8" stroke-width="1.300"/>
<path d="M34 384.500h8" stroke="#9a9a9a" stroke-width="1" stroke-dasharray="1 1"/>
<rect x="46.0" y="378" width="11" height="12.500" fill="#f7d9b8" stroke="#6d7178" stroke-width="1"/><path d="M46.5 390c1-4 4-6 10-6.500v6.500z" fill="#7fd08a"/><path d="M46.5 390c1-4 4-6 10-6.500" stroke="#555" stroke-width=".8" fill="none"/><path d="M46.0 377c-1.500 2-2.500 3.300-2.500 4.600a2.500 2.500 0 0 0 5 0c0-1.300-1-2.600-2.500-4.600z" fill="#3d8fe0"/>
<path d="M34 402.500h8" stroke="#9a9a9a" stroke-width="1" stroke-dasharray="1 1"/>
<rect x="29.5" y="398.5" width="8" height="8" fill="#fff" stroke="#9aa0a8" stroke-width="1" rx="1"/><path d="M31.5 402.5h4" stroke="#2b3f8f" stroke-width="1"/><path d="M33.5 400.5v4" stroke="#2b3f8f" stroke-width="1"/>
<path d="M44.0 395.5h13v13h-4.500v-8.500h-2.500v8.500h-6v-4h2.500v-5h-2.500z" fill="#e8e8e8" stroke="#6d7178" stroke-width="1.100"/><path d="M46.5 395.5v4M52.5 395.5v4M52.5 404h4.500M44.0 406h2.500" stroke="#6d7178" stroke-width=".9"/>
<path d="M34 420.500h8" stroke="#9a9a9a" stroke-width="1" stroke-dasharray="1 1"/>
<path d="M44.0 413.5h13v13h-4.500v-8.500h-2.500v8.500h-6v-4h2.500v-5h-2.500z" fill="#e8e8e8" stroke="#6d7178" stroke-width="1.100"/><path d="M46.5 413.5v4M52.5 413.5v4M52.5 422h4.500M44.0 424h2.500" stroke="#6d7178" stroke-width=".9"/>
<path d="M34 438.500h8" stroke="#9a9a9a" stroke-width="1" stroke-dasharray="1 1"/>
<path d="M43.5 438h14M47.0 434.5v7M54.0 434.5v7" stroke="#6d7178" stroke-width="1.400"/><path d="M43.5 435q3.500 3.500 7 0 3.500 3.500 7 0" stroke="#6d7178" stroke-width="1" fill="none"/>
<path d="M34 456.500h8" stroke="#9a9a9a" stroke-width="1" stroke-dasharray="1 1"/>
<path d="M44.0 449.5c6 0 11.500 5 12.500 13h-11.500c.5-4 0-9-1-13z" fill="#6f737a"/><path d="M47.5 452c2.500 3 3.500 6 3.500 10" stroke="#f0c24a" stroke-width="1.400" stroke-dasharray="2.500 1.800" fill="none"/>
<path d="M34 474.500h8" stroke="#9a9a9a" stroke-width="1" stroke-dasharray="1 1"/>
<rect x="29.5" y="470.5" width="8" height="8" fill="#fff" stroke="#9aa0a8" stroke-width="1" rx="1"/><path d="M31.5 474.5h4" stroke="#2b3f8f" stroke-width="1"/><path d="M33.5 472.5v4" stroke="#2b3f8f" stroke-width="1"/>
<path d="M44.0 480.5v-5h2.500v-3.500h3v8.500zM52.5 480.5v-8.500c2.500 0 4 1.500 4 4v4.500z" fill="#ededed" stroke="#6d7178" stroke-width="1.100"/><path d="M51.0 467v14" stroke="#6d7178" stroke-width="1.100"/>
<path d="M34 492.500h8" stroke="#9a9a9a" stroke-width="1" stroke-dasharray="1 1"/>
<path d="M48.0 485.5h5v4h4.500v5h-4.500v4.500h-5v-4.500h-4.500v-5h4.500z" fill="#8b8f96"/><path d="M50.5 485.5v4M50.5 495v4" stroke="#f0c24a" stroke-width="1.300"/><path d="M43.5 492h4.500M53.0 492h4.500" stroke="#f0c24a" stroke-width="1.300"/><rect x="48.0" y="489.5" width="5" height="5" fill="#6f737a"/>
<path d="M34 510.500h8" stroke="#9a9a9a" stroke-width="1" stroke-dasharray="1 1"/>
<rect x="29.5" y="506.5" width="8" height="8" fill="#fff" stroke="#9aa0a8" stroke-width="1" rx="1"/><path d="M31.5 510.5h4" stroke="#2b3f8f" stroke-width="1"/><path d="M33.5 508.5v4" stroke="#2b3f8f" stroke-width="1"/>
<path d="M49.5 508l-5 9M49.5 508l5 9M49.5 508v8" stroke="#50545a" stroke-width="1.400" fill="none"/><rect x="46.0" y="504.5" width="7" height="4" fill="#50545a"/><path d="M53.0 505l3.500-1.500v4l-3.500-1.500M44.5 503l2 2" stroke="#50545a" stroke-width="1.200" fill="none"/>
<path d="M34 528.500h8" stroke="#9a9a9a" stroke-width="1" stroke-dasharray="1 1"/>
<path d="M46.5 521h-2.500v14h2.500M54.5 521h2.500v14h-2.500" stroke="#444" stroke-width="1.200" fill="none"/><rect x="46.0" y="523" width="9" height="10" fill="#dff0ff" stroke="#3c8fd8" stroke-width="1.300"/><path d="M48.0 526l4.500 4.500M48.0 526h3M48.0 526v3" stroke="#333" stroke-width=".9"/>
<path d="M20 546.500h5" stroke="#9a9a9a" stroke-width="1" stroke-dasharray="1 1"/>
<rect x="12.5" y="542.5" width="8" height="8" fill="#fff" stroke="#9aa0a8" stroke-width="1" rx="1"/><path d="M14.5 546.5h4" stroke="#2b3f8f" stroke-width="1"/>
<path d="M27.5 542v8.500c0 1.400 2.700 2.500 6 2.500s6-1.100 6-2.500V542" fill="#f2f2f2" stroke="#6d7178" stroke-width="1.100"/><ellipse cx="33.5" cy="542" rx="6" ry="2.300" fill="#f2f2f2" stroke="#6d7178" stroke-width="1.100"/><path d="M27.5 546c0 1.400 2.700 2.500 6 2.500s6-1.100 6-2.500" fill="none" stroke="#6d7178" stroke-width="1"/><rect x="33.5" y="546" width="6.500" height="6.500" fill="#fff" stroke="#55595f" stroke-width="1"/><path d="M35.3 550.8l2.800-2.800M36.3 547.8h2v2" stroke="#333" stroke-width=".8" fill="none"/>
<path d="M34 564.500h8" stroke="#9a9a9a" stroke-width="1" stroke-dasharray="1 1"/>
<polygon points="50.5,557.5 57.0,563 56.0,570.5 44.0,570.5 44.0,565" fill="#f4f4f4" stroke="#6d7178" stroke-width="1.200"/><path d="M50.5 557.5l-2.500 8 8 .5M44.0 565l4 .5 2 5" stroke="#6d7178" stroke-width=".8" fill="none"/>
<rect x="51.0" y="565" width="6.500" height="6.500" fill="#fff" stroke="#55595f" stroke-width="1"/><path d="M52.8 569.8l2.800-2.800M53.8 566.8h2v2" stroke="#333" stroke-width=".8" fill="none"/>
<path d="M34 582.500h8" stroke="#9a9a9a" stroke-width="1" stroke-dasharray="1 1"/>
<rect x="29.5" y="578.5" width="8" height="8" fill="#fff" stroke="#9aa0a8" stroke-width="1" rx="1"/><path d="M31.5 582.5h4" stroke="#2b3f8f" stroke-width="1"/><path d="M33.5 580.5v4" stroke="#2b3f8f" stroke-width="1"/>
<path d="M44.5 577h3M49.5 577h2.500M53.5 578l2.500 2M56.0 583.5l-2 2.500M49.5 587h3" stroke="#3c8fd8" stroke-width="1.400" fill="none"/><circle cx="48.5" cy="577" r=".8" fill="#3c8fd8"/><circle cx="56.3" cy="582" r=".8" fill="#3c8fd8"/>
<rect x="51.0" y="583" width="6.500" height="6.500" fill="#fff" stroke="#55595f" stroke-width="1"/><path d="M52.8 587.8l2.800-2.800M53.8 584.8h2v2" stroke="#333" stroke-width=".8" fill="none"/>
<path d="M34 600.500h8" stroke="#9a9a9a" stroke-width="1" stroke-dasharray="1 1"/>
<path d="M44.0 593.5h13v13h-4.500v-8.500h-2.500v8.500h-6v-4h2.500v-5h-2.500z" fill="#e8e8e8" stroke="#6d7178" stroke-width="1.100"/><path d="M46.5 593.5v4M52.5 593.5v4M52.5 602h4.500M44.0 604h2.500" stroke="#6d7178" stroke-width=".9"/>
<rect x="51.0" y="601" width="6.500" height="6.500" fill="#fff" stroke="#55595f" stroke-width="1"/><path d="M52.8 605.8l2.800-2.800M53.8 602.8h2v2" stroke="#333" stroke-width=".8" fill="none"/>
<path d="M34 618.500h8" stroke="#9a9a9a" stroke-width="1" stroke-dasharray="1 1"/>
<path d="M44.0 611.5h13v13h-4.500v-8.500h-2.500v8.500h-6v-4h2.500v-5h-2.500z" fill="#e8e8e8" stroke="#6d7178" stroke-width="1.100"/><path d="M46.5 611.5v4M52.5 611.5v4M52.5 620h4.500M44.0 622h2.500" stroke="#6d7178" stroke-width=".9"/>
<rect x="51.0" y="619" width="6.500" height="6.500" fill="#fff" stroke="#55595f" stroke-width="1"/><path d="M52.8 623.8l2.800-2.800M53.8 620.8h2v2" stroke="#333" stroke-width=".8" fill="none"/>
<path d="M34 636.500h8" stroke="#9a9a9a" stroke-width="1" stroke-dasharray="1 1"/>
<path d="M44.0 629.5c6 0 11.500 5 12.500 13h-11.500c.5-4 0-9-1-13z" fill="#6f737a"/><path d="M47.5 632c2.500 3 3.500 6 3.500 10" stroke="#f0c24a" stroke-width="1.400" stroke-dasharray="2.500 1.800" fill="none"/>
<rect x="51.0" y="637" width="6.500" height="6.500" fill="#fff" stroke="#55595f" stroke-width="1"/><path d="M52.8 641.8l2.800-2.800M53.8 638.8h2v2" stroke="#333" stroke-width=".8" fill="none"/>
<path d="M34 654.500h8" stroke="#9a9a9a" stroke-width="1" stroke-dasharray="1 1"/>
<path d="M46.5 647h-2.500v14h2.500M54.5 647h2.500v14h-2.500" stroke="#444" stroke-width="1.200" fill="none"/><rect x="46.0" y="649" width="9" height="10" fill="#dff0ff" stroke="#3c8fd8" stroke-width="1.300"/><path d="M48.0 652l4.500 4.500M48.0 652h3M48.0 652v3" stroke="#333" stroke-width=".9"/>
<rect x="51.0" y="655" width="6.500" height="6.500" fill="#fff" stroke="#55595f" stroke-width="1"/><path d="M52.8 659.8l2.800-2.800M53.8 656.8h2v2" stroke="#333" stroke-width=".8" fill="none"/>
</svg>
<span class="abs" style="left:17px;top:8.500px;font-size:11px;color:#f0f1f3;white-space:nowrap">工具區</span>
<span class="abs" style="left:186.500px;top:31px;font-size:12px;font-weight:bold;color:#7a818b">?</span>
<span class="abs" style="left:6px;top:52.500px;font-size:11px;color:#000;white-space:nowrap">作用中圖面視圖</span>
<span class="tl" style="left:48px;top:74px;font-size:12px">Align-Superelevation-5</span>
<span class="tl" style="left:65px;top:92.5px">點</span>
<span class="tl" style="left:65px;top:110.5px">點群組</span>
<span class="tl" style="left:65px;top:128.5px">地形</span>
<span class="tl" style="left:65px;top:146.5px">定線</span>
<span class="tl" style="left:65px;top:164.5px">地勢線</span>
<span class="tl" style="left:65px;top:182.5px">工址</span>
<span class="tl" style="left:65px;top:200.5px">道岔和橫渡線</span>
<span class="tl" style="left:65px;top:218.5px">集水區</span>
<span class="tl" style="left:65px;top:236.5px">管網</span>
<span class="tl" style="left:65px;top:254.5px">壓力管網</span>
<span class="tl" style="left:65px;top:272.5px">橋樑</span>
<span class="tl" style="left:65px;top:290.5px">廊道</span>
<span class="tl" style="left:65px;top:308.5px">組合</span>
<span class="tl" style="left:65px;top:326.5px">交叉</span>
<span class="tl" style="left:65px;top:344.5px">測量</span>
<span class="tl" style="left:65px;top:362.5px">檢視框群組</span>
<span class="tl" style="left:48px;top:380px;font-size:11px">資料捷徑 []</span>
<span class="tl" style="left:65px;top:398.5px">地形</span>
<span class="tl" style="left:65px;top:416.5px">定線</span>
<span class="tl" style="left:65px;top:434.5px">管網</span>
<span class="tl" style="left:65px;top:452.5px">壓力管網</span>
<span class="tl" style="left:65px;top:470.5px">廊道</span>
<span class="tl" style="left:65px;top:488.5px">檢視框群組</span>
<span class="vt" style="top:97.5px;color:#e6e8eb">探勘器</span><span class="vt" style="top:192.5px;">設定</span><span class="vt" style="top:310px;">測量</span><span class="vt" style="top:423.5px;">工具箱</span>
</div>
<div id="vp1">
<svg width="777" height="389" viewBox="227 164 777 389" style="left:0;top:0">
<path d="M227 416H1004" stroke="#00e400" stroke-width="1.600"/>
<path d="M227 485.800H1004" stroke="#00e400" stroke-width="1.600"/>
<path d="M227 428.400H1004M227 474.400H1004" stroke="#f4f4f4" stroke-width="1.500"/>
<path d="M227 470.800H733.500" stroke="#dc8888" stroke-width="1.500"/>
<path d="M227 451.100H1004" stroke="#c81414" stroke-width="2.400"/>
<path d="M227 458.600H258L277.600 466.300H430.800L449.200 459" stroke="#c81414" stroke-width="2.100" fill="none"/>
<path d="M449.200 459H766" stroke="#d4142c" stroke-width="2.200" fill="none"/>
<path d="M233.500 453.300L277.600 435.400H430.800L513.600 469.800" stroke="#1c6ce0" stroke-width="2" fill="none"/>
<path d="M733.500 470.900H1004" stroke="#1c6ce0" stroke-width="2"/>
<path d="M766 458.800H802.200L824.600 467.300H1004" stroke="#0a12dc" stroke-width="2.200" fill="none"/>
<path d="M744 459L790 447.500" stroke="#e02424" stroke-width="1.600"/>
<path d="M690 470.800C715 470.500 728 470 738 467.800S760 460.500 772.700 454.200L813.700 438.700L824.600 434.800C835 434.400 845 434.600 1000 434.600L1004 436" stroke="#f27878" stroke-width="1.500" fill="none"/>
<path d="M705 470.800C722 470 735 468.500 748.700 464.200L792.800 446.400L820 436.600C832 433.800 850 434.200 990 434.300L1004 435" stroke="#f27878" stroke-width="1.200" fill="none"/>
<path d="M240.9 428.400V434M240.9 474.400V467.600" stroke="#f4f4f4" stroke-width="1.300"/>
<path d="M258.5 428.400V434M258.5 474.400V467.600" stroke="#f4f4f4" stroke-width="1.300"/>
<path d="M277.6 428.400V434M277.6 474.400V467.600" stroke="#f4f4f4" stroke-width="1.300"/>
<rect x="234.3" y="425" width="11.6" height="1.600" fill="#ec8c8c"/><rect x="234.3" y="476" width="11.6" height="1.600" fill="#ec8c8c"/>
<rect x="252" y="425" width="12.6" height="1.600" fill="#ec8c8c"/><rect x="252" y="476" width="12.6" height="1.600" fill="#ec8c8c"/>
<rect x="270.8" y="425" width="11.8" height="1.600" fill="#ec8c8c"/><rect x="270.8" y="476" width="11.8" height="1.600" fill="#ec8c8c"/>
<path d="M227 420.100H277.6V416" stroke="#00e400" stroke-width="1.300" fill="none"/>
<path d="M227 481.200H277.6V485.8" stroke="#00e400" stroke-width="1.300" fill="none"/>
<rect x="228" y="419.800" width="4.7" height="4.400" fill="#00e400"/><rect x="228" y="478.300" width="4.7" height="3.200" fill="#00e400"/>
<rect x="255.6" y="419.800" width="5.6" height="4.400" fill="#00e400"/><rect x="255.6" y="478.300" width="5.6" height="3.200" fill="#00e400"/>
<path d="M430.8 428.400V434M430.8 474.400V467.600" stroke="#f4f4f4" stroke-width="1.300"/>
<path d="M449.5 428.400V434M449.5 474.400V467.600" stroke="#f4f4f4" stroke-width="1.300"/>
<path d="M467.5 428.400V434M467.5 474.400V467.600" stroke="#f4f4f4" stroke-width="1.300"/>
<path d="M486.5 428.400V434M486.5 474.400V467.600" stroke="#f4f4f4" stroke-width="1.300"/>
<path d="M513.6 428.400V434M513.6 474.400V467.600" stroke="#f4f4f4" stroke-width="1.300"/>
<rect x="425" y="425" width="11.0" height="1.600" fill="#ec8c8c"/><rect x="425" y="476" width="11.0" height="1.600" fill="#ec8c8c"/>
<rect x="443.4" y="425" width="11.2" height="1.600" fill="#ec8c8c"/><rect x="443.4" y="476" width="11.2" height="1.600" fill="#ec8c8c"/>
<rect x="461.7" y="425" width="11.6" height="1.600" fill="#ec8c8c"/><rect x="461.7" y="476" width="11.6" height="1.600" fill="#ec8c8c"/>
<rect x="480" y="425" width="11.7" height="1.600" fill="#ec8c8c"/><rect x="480" y="476" width="11.7" height="1.600" fill="#ec8c8c"/>
<rect x="508" y="425" width="11.8" height="1.600" fill="#ec8c8c"/><rect x="508" y="476" width="11.8" height="1.600" fill="#ec8c8c"/>
<path d="M430.4 422.500V420.100H513.6V422.5" stroke="#00e400" stroke-width="1.300" fill="none"/>
<path d="M430.4 479V481.200H513.6V479" stroke="#00e400" stroke-width="1.300" fill="none"/>
<rect x="445.7" y="419.800" width="6.3" height="4.400" fill="#00e400"/><rect x="445.7" y="478.300" width="6.3" height="3.200" fill="#00e400"/>
<rect x="473.9" y="419.800" width="5.8" height="4.400" fill="#00e400"/><rect x="473.9" y="478.300" width="5.8" height="3.200" fill="#00e400"/>
<rect x="497" y="419.800" width="5.4" height="4.400" fill="#00e400"/><rect x="497" y="478.300" width="5.4" height="3.200" fill="#00e400"/>
<path d="M733.6 428.400V434M733.6 474.400V467.600" stroke="#f4f4f4" stroke-width="1.300"/>
<path d="M763.1 428.400V434M763.1 474.400V467.600" stroke="#f4f4f4" stroke-width="1.300"/>
<path d="M783.3 428.400V434M783.3 474.400V467.600" stroke="#f4f4f4" stroke-width="1.300"/>
<path d="M802.9 428.400V434M802.9 474.400V467.600" stroke="#f4f4f4" stroke-width="1.300"/>
<path d="M824.6 428.400V434M824.6 474.400V467.600" stroke="#f4f4f4" stroke-width="1.300"/>
<rect x="727.9" y="425" width="10.8" height="1.600" fill="#ec8c8c"/><rect x="727.9" y="476" width="10.8" height="1.600" fill="#ec8c8c"/>
<rect x="757.6" y="425" width="10.4" height="1.600" fill="#ec8c8c"/><rect x="757.6" y="476" width="10.4" height="1.600" fill="#ec8c8c"/>
<rect x="777.4" y="425" width="10.8" height="1.600" fill="#ec8c8c"/><rect x="777.4" y="476" width="10.8" height="1.600" fill="#ec8c8c"/>
<rect x="797.2" y="425" width="10.7" height="1.600" fill="#ec8c8c"/><rect x="797.2" y="476" width="10.7" height="1.600" fill="#ec8c8c"/>
<rect x="819.2" y="425" width="11.6" height="1.600" fill="#ec8c8c"/><rect x="819.2" y="476" width="11.6" height="1.600" fill="#ec8c8c"/>
<path d="M733.6 422.500V420.100H824.6V422.5" stroke="#00e400" stroke-width="1.300" fill="none"/>
<path d="M733.6 479V481.200H824.6V479" stroke="#00e400" stroke-width="1.300" fill="none"/>
<rect x="744.9" y="419.800" width="6.1" height="4.400" fill="#00e400"/><rect x="744.9" y="478.300" width="6.1" height="3.200" fill="#00e400"/>
<rect x="770" y="419.800" width="5.8" height="4.400" fill="#00e400"/><rect x="770" y="478.300" width="5.8" height="3.200" fill="#00e400"/>
<rect x="800.9" y="419.800" width="5.4" height="4.400" fill="#00e400"/><rect x="800.9" y="478.300" width="5.4" height="3.200" fill="#00e400"/>
<rect x="252" y="424.300" width="12.600" height="2.800" fill="#ec8c8c"/><rect x="250" y="475.800" width="12.600" height="3" fill="#ec8c8c"/>
<path d="M467.5 420V422.500M467.5 481V479" stroke="#00e400" stroke-width="1.200"/>
<path d="M485.9 420V422.500M485.9 481V479" stroke="#00e400" stroke-width="1.200"/>
<path d="M763 420V422.500M763 481V479" stroke="#00e400" stroke-width="1.200"/>
<path d="M783.6 420V422.500M783.6 481V479" stroke="#00e400" stroke-width="1.200"/>
<path d="M412 425V431.300M412 478V471.500" stroke="#f4f4f4" stroke-width="1.300"/>
<rect x="406.2" y="423.500" width="11.6" height="1.600" fill="#ec8c8c"/><rect x="406.2" y="477.800" width="11.6" height="2.400" fill="#ec8c8c"/>
<path d="M566.2 425V431.300M566.2 478V471.500" stroke="#f4f4f4" stroke-width="1.300"/>
<rect x="560.4" y="423.500" width="11.6" height="1.600" fill="#ec8c8c"/><rect x="560.4" y="477.800" width="11.6" height="2.400" fill="#ec8c8c"/>
<path d="M721 425V431.300M721 478V471.500" stroke="#f4f4f4" stroke-width="1.300"/>
<rect x="714.3" y="423.500" width="11.6" height="1.600" fill="#ec8c8c"/><rect x="714.3" y="477.800" width="11.6" height="2.400" fill="#ec8c8c"/>
<path d="M875 425V431.300M875 478V471.500" stroke="#f4f4f4" stroke-width="1.300"/>
<rect x="868.3" y="423.500" width="11.9" height="1.600" fill="#ec8c8c"/><rect x="868.3" y="477.800" width="11.9" height="2.400" fill="#ec8c8c"/>
<rect x="233.7" y="416.500" width="9.1" height="2" fill="#00e400"/><rect x="233.7" y="486.300" width="9.1" height="2" fill="#00e400"/>
<rect x="623.8" y="416.500" width="6.2" height="2" fill="#00e400"/><rect x="623.8" y="486.300" width="6.2" height="2" fill="#00e400"/>
<rect x="356" y="413.500" width="6.700" height="4.500" fill="#00e400"/><polygon points="357.500,486 361.500,486 363,491 356,491" fill="#00e400"/>
<rect x="915" y="412.400" width="7" height="5.400" fill="#00e400"/><rect x="915" y="486" width="7" height="5" fill="#00e400"/>
<rect x="351" y="434.300" width="6" height="2" fill="#00e400"/><rect x="351" y="465" width="6" height="2.800" fill="#00e400"/>
<rect x="603" y="458" width="6" height="2" fill="#00e400"/><rect x="641" y="458.200" width="6.600" height="1.400" fill="#8a9a20"/>
<rect x="462.300" y="469.300" width="4.700" height="1.600" fill="#00e400"/>
<rect x="915.800" y="433" width="5.400" height="3" fill="#00e400"/><rect x="915" y="465.800" width="7" height="1.800" fill="#00e400"/><rect x="937" y="469.600" width="5.400" height="1.800" fill="#00e400"/>
<rect x="440.4" y="414.800" width="2" height="2.400" fill="#00e400"/><rect x="440.4" y="484.800" width="2" height="3" fill="#00e400"/>
<rect x="810.9" y="414.800" width="2" height="2.400" fill="#00e400"/><rect x="810.9" y="484.800" width="2" height="3" fill="#00e400"/>
<rect x="256.8" y="449.200" width="1.4" height="3.600" fill="#00e400"/>
<rect x="275.5" y="449.200" width="1.6" height="3.600" fill="#00e400"/>
<rect x="428.7" y="449.200" width="1.4" height="3.600" fill="#00e400"/>
<rect x="447.5" y="449.200" width="1.4" height="3.600" fill="#00e400"/>
<rect x="465.6" y="449.200" width="1.2" height="3.600" fill="#00e400"/>
<rect x="484.6" y="449.200" width="1.4" height="3.600" fill="#00e400"/>
<rect x="512.2" y="449.200" width="1.6" height="3.600" fill="#00e400"/>
<rect x="731.1" y="449.200" width="1.8" height="3.600" fill="#00e400"/>
<rect x="761.0" y="449.200" width="1.8" height="3.600" fill="#00e400"/>
<rect x="781.1" y="449.200" width="1.2" height="3.600" fill="#00e400"/>
<rect x="801.1" y="449.200" width="1.2" height="3.600" fill="#00e400"/>
<rect x="822.0" y="449.200" width="3" height="3.600" fill="#00e400"/>
<polygon points="230.8,450.3 235.4,458.1 226.20000000000002,458.1" fill="#f5a823" fill-opacity=".18" stroke="#f5a823" stroke-width="1.900" stroke-linejoin="round"/><path d="M230.8 451.0V457.7" stroke="#f5a823" stroke-width="1.500"/>
<polygon points="249.6,442.2 254.2,450.0 245.0,450.0" fill="#f5a823" fill-opacity=".18" stroke="#f5a823" stroke-width="1.900" stroke-linejoin="round"/><path d="M249.6 442.9V449.59999999999997" stroke="#f5a823" stroke-width="1.500"/>
<polygon points="267.9,434.5 272.5,442.3 263.29999999999995,442.3" fill="#f5a823" fill-opacity=".18" stroke="#f5a823" stroke-width="1.900" stroke-linejoin="round"/><path d="M267.9 435.2V441.9" stroke="#f5a823" stroke-width="1.500"/>
<polygon points="267.9,457.7 272.5,465.5 263.29999999999995,465.5" fill="#f5a823" fill-opacity=".18" stroke="#f5a823" stroke-width="1.900" stroke-linejoin="round"/><path d="M267.9 458.4V465.09999999999997" stroke="#f5a823" stroke-width="1.500"/>
<polygon points="439.9,434.5 444.5,442.3 435.29999999999995,442.3" fill="#f5a823" fill-opacity=".18" stroke="#f5a823" stroke-width="1.900" stroke-linejoin="round"/><path d="M439.9 435.2V441.9" stroke="#f5a823" stroke-width="1.500"/>
<polygon points="458.4,442.2 463.0,450.0 453.79999999999995,450.0" fill="#f5a823" fill-opacity=".18" stroke="#f5a823" stroke-width="1.900" stroke-linejoin="round"/><path d="M458.4 442.9V449.59999999999997" stroke="#f5a823" stroke-width="1.500"/>
<polygon points="477.2,450.0 481.8,457.8 472.59999999999997,457.8" fill="#f5a823" fill-opacity=".18" stroke="#f5a823" stroke-width="1.900" stroke-linejoin="round"/><path d="M477.2 450.7V457.4" stroke="#f5a823" stroke-width="1.500"/>
<polygon points="500,459.6 504.6,467.40000000000003 495.4,467.40000000000003" fill="#f5a823" fill-opacity=".18" stroke="#f5a823" stroke-width="1.900" stroke-linejoin="round"/><path d="M500 460.3V467.0" stroke="#f5a823" stroke-width="1.500"/>
<polygon points="439.9,457.7 444.5,465.5 435.29999999999995,465.5" fill="#f5a823" fill-opacity=".18" stroke="#f5a823" stroke-width="1.900" stroke-linejoin="round"/><path d="M439.9 458.4V465.09999999999997" stroke="#f5a823" stroke-width="1.500"/>
<polygon points="748.7,460.0 753.3000000000001,467.8 744.1,467.8" fill="#f5a823" fill-opacity=".18" stroke="#f5a823" stroke-width="1.900" stroke-linejoin="round"/><path d="M748.7 460.7V467.4" stroke="#f5a823" stroke-width="1.500"/>
<polygon points="773,450.0 777.6,457.8 768.4,457.8" fill="#f5a823" fill-opacity=".18" stroke="#f5a823" stroke-width="1.900" stroke-linejoin="round"/><path d="M773 450.7V457.4" stroke="#f5a823" stroke-width="1.500"/>
<polygon points="793.2,442.2 797.8000000000001,450.0 788.6,450.0" fill="#f5a823" fill-opacity=".18" stroke="#f5a823" stroke-width="1.900" stroke-linejoin="round"/><path d="M793.2 442.9V449.59999999999997" stroke="#f5a823" stroke-width="1.500"/>
<polygon points="814,434.0 818.6,441.8 809.4,441.8" fill="#f5a823" fill-opacity=".18" stroke="#f5a823" stroke-width="1.900" stroke-linejoin="round"/><path d="M814 434.7V441.4" stroke="#f5a823" stroke-width="1.500"/>
<polygon points="814,458.0 818.6,465.8 809.4,465.8" fill="#f5a823" fill-opacity=".18" stroke="#f5a823" stroke-width="1.900" stroke-linejoin="round"/><path d="M814 458.7V465.4" stroke="#f5a823" stroke-width="1.500"/>
<circle cx="958.200" cy="231.400" r="29" fill="none" stroke="#343b45" stroke-width="8"/>
<rect x="944" y="216.300" width="29.300" height="29.300" fill="#5b6169"/><rect x="948" y="220.300" width="21.300" height="21.300" fill="#666c74"/>
<rect x="936.200" y="280.200" width="42.800" height="14" rx="3.500" fill="#4b5159"/>
<rect x="948.300" y="178.500" width="10" height="2.200" fill="#f0f0f0"/>
<rect x="967.300" y="175.500" width="6.500" height="6.500" fill="none" stroke="#f0f0f0" stroke-width="1.600"/><path d="M969.500 175v-1.800h6.500v6.500h-1.800" fill="none" stroke="#f0f0f0" stroke-width="1.400"/>
<path d="M986 174l8 7.500M994 174l-8 7.500" stroke="#f4f4f4" stroke-width="1.900"/>
</svg>
<span class="cl" style="left:725.9px;top:30.19999999999999px;">北</span><span class="cl" style="left:725.9px;top:92.80000000000001px;">南</span><span class="cl" style="left:695px;top:61.900000000000006px;">西</span><span class="cl" style="left:756.7px;top:61.900000000000006px;">東</span><span class="cl" style="left:723px;top:58px;font-size:16px;font-weight:normal;color:#50565e;line-height:16px">上</span><span class="abs" style="left:713.500px;top:118.500px;font-size:9.300px;color:#596068;font-family:'Liberation Sans',sans-serif;letter-spacing:0">WCS</span><span class="abs" style="left:116px;top:241.500px;font-size:4.500px;color:#c87070;white-space:nowrap">超高</span>
</div>
<div id="split"><svg width="777" height="5" viewBox="227 552.500 777 5" style="left:0;top:0"><rect x="227" y="552.500" width="18" height="4.500" fill="#565555"/><path d="M233.500 554.700h5M236 552.500v4.500" stroke="#8a8a8a" stroke-width="1"/><rect x="245" y="552.500" width="1" height="4.500" fill="#6e6e6e"/><path d="M610.500 553.700h10M610.500 555.700h10" stroke="#6a6a6a" stroke-width="1"/><rect x="985.500" y="552.500" width="1" height="4.500" fill="#6e6e6e"/><rect x="986.500" y="552.500" width="17" height="4.500" fill="#565555"/><path d="M992 554.700h5M994.500 552.500v4.500" stroke="#8a8a8a" stroke-width="1"/></svg></div>
<div id="vp2">
<svg width="777" height="387" viewBox="227 557 777 387" style="left:-4px;top:-5px">
<path d="M231 664.500H359.800M231 678H359.800" stroke="#00e400" stroke-width="1.400"/>
<path d="M231 667.400H360.200V676.100H231" stroke="#f0f0f0" stroke-width="1.300" fill="none"/>
<path d="M240 668.700H322M231 676.300H360" stroke="#ec8c8c" stroke-width="1.100"/>
<path d="M231 672.500H360" stroke="#d81414" stroke-width="2"/>
<path d="M262 675H291" stroke="#1c6ce0" stroke-width="1.800"/>
<polygon points="244.5,668.2 249.3,676.84 239.7,676.84" fill="#f5a823" fill-opacity=".78" stroke="#f5a823" stroke-width="1.200" stroke-linejoin="round"/>
<polygon points="249,666.2 253.8,674.84 244.2,674.84" fill="#f5a823" fill-opacity=".78" stroke="#f5a823" stroke-width="1.200" stroke-linejoin="round"/>
<polygon points="254,663.2 258.8,671.84 249.2,671.84" fill="#f5a823" fill-opacity=".78" stroke="#f5a823" stroke-width="1.200" stroke-linejoin="round"/>
<polygon points="257,667.7 261.8,676.34 252.2,676.34" fill="#f5a823" fill-opacity=".78" stroke="#f5a823" stroke-width="1.200" stroke-linejoin="round"/>
<polygon points="251.5,668.7 256.3,677.34 246.7,677.34" fill="#f5a823" fill-opacity=".78" stroke="#f5a823" stroke-width="1.200" stroke-linejoin="round"/>
<polygon points="295,668.2 299.8,676.84 290.2,676.84" fill="#f5a823" fill-opacity=".78" stroke="#f5a823" stroke-width="1.200" stroke-linejoin="round"/>
<polygon points="296,663.7 300.8,672.34 291.2,672.34" fill="#f5a823" fill-opacity=".78" stroke="#f5a823" stroke-width="1.200" stroke-linejoin="round"/>
<polygon points="300,665.7 304.8,674.34 295.2,674.34" fill="#f5a823" fill-opacity=".78" stroke="#f5a823" stroke-width="1.200" stroke-linejoin="round"/>
<polygon points="304,667.7 308.8,676.34 299.2,676.34" fill="#f5a823" fill-opacity=".78" stroke="#f5a823" stroke-width="1.200" stroke-linejoin="round"/>
<polygon points="308.5,668.7 313.3,677.34 303.7,677.34" fill="#f5a823" fill-opacity=".78" stroke="#f5a823" stroke-width="1.200" stroke-linejoin="round"/>
<polygon points="302,668.7 306.8,677.34 297.2,677.34" fill="#f5a823" fill-opacity=".78" stroke="#f5a823" stroke-width="1.200" stroke-linejoin="round"/>
<path d="M231.0 840.2L280.5 860.0L524.5 842.9L536.8 847.9L772.3 823.0L865.4 913.3L862.8 940.0" stroke="#10c458" stroke-width="1.5" fill="none" stroke-linejoin="round"/>
<path d="M231 939.500L247 940" stroke="#10c458" stroke-width="1.500"/>
<path d="M306.3 860.0L302.5 866.0L307.0 868.0L292.0 873.7L302.5 878.5L293.8 882.4L300.5 887.0L284.0 888.0L282.0 893.0L287.0 898.0" stroke="#a6a6a6" stroke-width="1.15" fill="none" stroke-linejoin="round"/>
<path d="M323.7 858.6L329.5 867.9L307.3 876.6L310.0 890.0L304.4 894.0L308.0 900.8" stroke="#a6a6a6" stroke-width="1.15" fill="none" stroke-linejoin="round"/>
<path d="M347.0 856.7L352.8 867.9L329.5 875.6L331.5 891.0L326.6 898.8L335.4 909.5" stroke="#a6a6a6" stroke-width="1.15" fill="none" stroke-linejoin="round"/>
<path d="M369.2 855.3L377.0 867.0L363.4 871.8L390.5 876.6L395.3 891.0L389.5 898.8L370.2 909.5" stroke="#a6a6a6" stroke-width="1.15" fill="none" stroke-linejoin="round"/>
<path d="M388.5 853.4L403.0 870.8L413.7 873.7L428.9 880.6L438.9 893.9L441.0 907.2L426.7 910.6" stroke="#a6a6a6" stroke-width="1.15" fill="none" stroke-linejoin="round"/>
<path d="M398.2 852.8L408.9 864.0L430.0 867.2L438.9 872.8L448.9 882.8L467.8 896.0L471.0 907.0L455.6 914.0L449.0 919.5" stroke="#a6a6a6" stroke-width="1.15" fill="none" stroke-linejoin="round"/>
<path d="M423.3 850.6L430.0 867.2" stroke="#a6a6a6" stroke-width="1.15" fill="none" stroke-linejoin="round"/>
<path d="M446.7 849.4L453.3 865.0L467.8 886.0L473.3 898.3L486.7 895.0L484.4 902.8L467.8 910.6" stroke="#a6a6a6" stroke-width="1.15" fill="none" stroke-linejoin="round"/>
<path d="M493.3 846.0L478.9 852.8L477.8 860.6L495.6 878.3L505.6 877.2L512.2 868.3L517.8 869.4L516.7 883.9L505.6 900.6L486.7 902.8" stroke="#a6a6a6" stroke-width="1.15" fill="none" stroke-linejoin="round"/>
<path d="M538.9 848.3L536.7 867.2L530.0 880.6L526.7 897.2L504.4 905.0L501.0 911.7" stroke="#a6a6a6" stroke-width="1.15" fill="none" stroke-linejoin="round"/>
<path d="M526.7 897.2L544.4 883.9L553.3 880.6L565.6 870.6L580.0 875.0L595.6 872.8L608.9 862.8L611.0 851.7L605.6 840.6" stroke="#a6a6a6" stroke-width="1.15" fill="none" stroke-linejoin="round"/>
<path d="M526.7 897.2L531.0 907.2L548.9 918.3L580.0 920.0" stroke="#a6a6a6" stroke-width="1.15" fill="none" stroke-linejoin="round"/>
<path d="M556.7 845.0L562.2 856.0L575.6 868.3L588.9 881.7L606.7 897.2L595.6 900.6L604.4 918.3" stroke="#a6a6a6" stroke-width="1.15" fill="none" stroke-linejoin="round"/>
<path d="M573.3 843.9L575.6 856.0L580.0 866.0" stroke="#a6a6a6" stroke-width="1.15" fill="none" stroke-linejoin="round"/>
<path d="M588.9 841.7L591.0 858.3L595.6 870.6" stroke="#a6a6a6" stroke-width="1.15" fill="none" stroke-linejoin="round"/>
<path d="M628.9 837.2L623.3 847.2L631.0 860.6L650.5 876.3L648.0 889.0L657.4 898.4L655.0 917.0L662.0 921.6" stroke="#a6a6a6" stroke-width="1.15" fill="none" stroke-linejoin="round"/>
<path d="M615.6 870.6L624.4 889.4L626.7 909.4L631.0 918.3" stroke="#a6a6a6" stroke-width="1.15" fill="none" stroke-linejoin="round"/>
<path d="M674.9 834.4L683.0 840.2L684.2 850.7L695.8 858.8L702.8 875.0L712.0 876.3L702.8 885.6L709.8 903.0L721.4 921.6" stroke="#a6a6a6" stroke-width="1.15" fill="none" stroke-linejoin="round"/>
<path d="M690.0 833.3L693.5 841.4L704.0 847.2L714.4 863.5L726.0 879.8L733.0 893.7L742.3 912.3L754.0 921.6" stroke="#a6a6a6" stroke-width="1.15" fill="none" stroke-linejoin="round"/>
<path d="M709.8 832.0L716.7 842.6L728.4 848.4L737.7 860.0L750.5 872.8L747.0 885.6L756.3 903.0L767.9 894.9L788.8 899.5L800.5 907.7L807.4 899.5L844.7 907.7L854.0 913.5L852.8 921.6" stroke="#a6a6a6" stroke-width="1.15" fill="none" stroke-linejoin="round"/>
<path d="M742.3 828.6L745.8 835.6L758.6 837.9L765.6 849.5L766.7 865.8L773.7 874.0L802.8 884.4L856.3 905.3" stroke="#a6a6a6" stroke-width="1.15" fill="none" stroke-linejoin="round"/>
<path d="M756.3 903.0L779.5 903.0L772.5 912.3L788.8 919.3L792.3 915.8L821.4 918.1L854.0 912.3" stroke="#a6a6a6" stroke-width="1.15" fill="none" stroke-linejoin="round"/>
<path d="M231.9 862.0L237.7 868.8L233.8 876.6L239.6 878.5L246.0 874.0L256.0 877.0L269.6 872.7L271.5 867.0L280.2 862.0" stroke="#a6a6a6" stroke-width="1.15" fill="none" stroke-linejoin="round"/>
<path d="M246.4 886.3L257.0 881.4L269.6 872.7" stroke="#a6a6a6" stroke-width="1.15" fill="none" stroke-linejoin="round"/>
<path d="M231.0 884.0L236.0 881.0L241.0 885.0" stroke="#a6a6a6" stroke-width="1.15" fill="none" stroke-linejoin="round"/>
<path d="M340.0 939.0L352.0 925.0L372.0 922.0L384.0 926.0" stroke="#a6a6a6" stroke-width="1.15" fill="none" stroke-linejoin="round"/>
<path d="M336.0 914.0L350.0 919.0L372.0 916.0L384.0 919.0" stroke="#a6a6a6" stroke-width="1.15" fill="none" stroke-linejoin="round"/>
<path d="M654.0 833.3L663.3 840.2L670.2 848.4L666.7 856.5L672.6 868.0L678.4 874.0L669.0 879.8L677.2 903.0L690.0 921.6" stroke="#dcdcdc" stroke-width="1.2" fill="none" stroke-linejoin="round"/>
<path d="M768.6 824.0L769.0 842.6L776.0 844.9L779.5 860.0L784.2 865.8L792.3 865.3L798.0 853.0" stroke="#dcdcdc" stroke-width="1.2" fill="none" stroke-linejoin="round"/>
<path d="M546.7 891.7L553.3 885.0L571.0 877.2L584.4 881.7L575.6 888.3L566.7 887.2L553.3 900.6L547.8 896.0" stroke="#dcdcdc" stroke-width="1.2" fill="none" stroke-linejoin="round"/>
<path d="M562.0 856.0L575.0 868.0L586.0 878.0L597.0 887.0L607.0 897.0" stroke="#dcdcdc" stroke-width="1.2" fill="none" stroke-linejoin="round"/>
<path d="M690.0 921.6L684.0 932.0L688.0 943.0" stroke="#a6a6a6" stroke-width="1.15" fill="none" stroke-linejoin="round"/>
<path d="M662.0 921.6L661.0 943.0" stroke="#a6a6a6" stroke-width="1.15" fill="none" stroke-linejoin="round"/>
<path d="M721.4 921.6L737.7 943.0" stroke="#a6a6a6" stroke-width="1.15" fill="none" stroke-linejoin="round"/>
<path d="M754.0 921.6L770.0 943.0" stroke="#a6a6a6" stroke-width="1.15" fill="none" stroke-linejoin="round"/>
<path d="M779.5 921.0L782.0 943.0" stroke="#a6a6a6" stroke-width="1.15" fill="none" stroke-linejoin="round"/>
<path d="M789.0 921.0L789.0 943.0" stroke="#a6a6a6" stroke-width="1.15" fill="none" stroke-linejoin="round"/>
<path d="M604.4 918.3L612.0 930.0L610.0 943.0" stroke="#a6a6a6" stroke-width="1.15" fill="none" stroke-linejoin="round"/>
<path d="M631.0 918.3L640.0 930.0L652.0 943.0" stroke="#a6a6a6" stroke-width="1.15" fill="none" stroke-linejoin="round"/>
<path d="M580.0 920.0L600.0 930.0L640.0 936.0L700.0 938.0" stroke="#a6a6a6" stroke-width="1.15" fill="none" stroke-linejoin="round"/>
<path d="M449.0 919.5L455.0 930.0L470.0 943.0" stroke="#a6a6a6" stroke-width="1.15" fill="none" stroke-linejoin="round"/>
<path d="M501.0 911.7L498.0 925.0L505.0 943.0" stroke="#a6a6a6" stroke-width="1.15" fill="none" stroke-linejoin="round"/>
<path d="M548.9 918.3L560.0 928.0L585.0 943.0" stroke="#a6a6a6" stroke-width="1.15" fill="none" stroke-linejoin="round"/>
<path d="M467.8 910.6L480.0 925.0L478.0 943.0" stroke="#a6a6a6" stroke-width="1.15" fill="none" stroke-linejoin="round"/>
<path d="M852.8 921.6L850.0 930.0L846.0 943.0" stroke="#a6a6a6" stroke-width="1.15" fill="none" stroke-linejoin="round"/>
<path d="M821.0 918.0L810.0 930.0L790.0 935.0" stroke="#a6a6a6" stroke-width="1.15" fill="none" stroke-linejoin="round"/>
<path d="M354.7 883.4L365.7 882.4L363.4 890.0L357.6 892.0Z" stroke="#a6a6a6" stroke-width="1" fill="none" stroke-linejoin="round"/>
<path d="M654.0 871.6L658.6 869.3L662.0 872.8L657.4 876.3Z" stroke="#a6a6a6" stroke-width="1" fill="none" stroke-linejoin="round"/>
<path d="M632.2 852.8L635.0 847.2L636.7 851.7Z" stroke="#a6a6a6" stroke-width="1" fill="none" stroke-linejoin="round"/>
<path d="M779.0 909.5L784.0 908.0L786.0 911.5L781.0 913.5Z" stroke="#a6a6a6" stroke-width="1" fill="none" stroke-linejoin="round"/>
<path d="M777.0 900.0L790.0 901.0L796.0 904.0" stroke="#a6a6a6" stroke-width="1" fill="none" stroke-linejoin="round"/>
<path d="M818.0 915.0L846.0 917.5" stroke="#a6a6a6" stroke-width="2" fill="none" stroke-linejoin="round"/>
<path d="M503.0 893.0L510.0 890.0" stroke="#a6a6a6" stroke-width="1.5" fill="none" stroke-linejoin="round"/>
<path d="M501.0 912.0L507.0 909.0" stroke="#a6a6a6" stroke-width="1.5" fill="none" stroke-linejoin="round"/>
<path d="M290.0 877.0L293.0 873.0L293.0 879.0" stroke="#dcdcdc" stroke-width="1.2" fill="none" stroke-linejoin="round"/>
<path d="M759 908l2 8M762 907l2 9M765 909l1 7M758 913h9" stroke="#d0d0d0" stroke-width="1"/>
<polygon points="231,901.500 262,903.500 305,908 336,911.500 383,915 440,917 440,921 383,920 336,918 305,915.500 262,913 231,913.500" fill="#8a8a8a" fill-opacity=".42"/>
<path d="M231.0 902.0L262.0 904.0L305.0 908.5L336.0 912.0L383.0 915.3L440.0 917.3" stroke="#9a9a9a" stroke-width="1.1" fill="none" stroke-linejoin="round"/>
<path d="M231.0 904.1L262.0 906.1L305.0 910.3L336.0 913.5L383.0 916.6L440.0 918.3" stroke="#7a7a7a" stroke-width="1" fill="none" stroke-linejoin="round"/>
<path d="M231.0 906.2L262.0 908.2L305.0 912.1L336.0 914.9L383.0 917.8L440.0 919.4" stroke="#a8a8a8" stroke-width="1.2" fill="none" stroke-linejoin="round"/>
<path d="M231.0 908.3L262.0 910.3L305.0 913.9L336.0 916.4L383.0 919.1L440.0 920.4" stroke="#787878" stroke-width="1" fill="none" stroke-linejoin="round"/>
<path d="M231.0 910.4L262.0 912.4L305.0 915.6L336.0 917.9L383.0 920.3L440.0 921.5" stroke="#8e8e8e" stroke-width="1" fill="none" stroke-linejoin="round"/>
<path d="M231.0 912.5L262.0 914.5L305.0 917.4L336.0 919.4L383.0 921.6L440.0 922.5" stroke="#707070" stroke-width="1" fill="none" stroke-linejoin="round"/>
<path d="M340.0 912.0L352.0 908.5L356.0 913.0L364.0 909.5L370.0 914.0L385.0 911.5L392.0 915.0L420.0 913.5L440.0 916.0" stroke="#8c8c8c" stroke-width="1" fill="none" stroke-linejoin="round"/>
<path d="M252.4 916.0L258.2 913.7L276.7 916.6L271.0 918.9L258.2 919.5Z" stroke="#9a9a9a" stroke-width="1.1" fill="none" stroke-linejoin="round"/>
<path d="M231.5 906.7L243.0 914.8L238.4 919.5L251.2 928.7L266.3 934.5L278.0 939.5" stroke="#8e8e8e" stroke-width="1.1" fill="none" stroke-linejoin="round"/>
<path d="M267.5 933.4L272.0 926.4L283.7 920.6L297.6 917.0" stroke="#8e8e8e" stroke-width="1.1" fill="none" stroke-linejoin="round"/>
<path d="M277.9 935.7L286.0 927.6L302.3 920.6L320.8 918.3" stroke="#8e8e8e" stroke-width="1.1" fill="none" stroke-linejoin="round"/>
<path d="M309.2 939.2L324.3 934.5L332.4 926.4L330.0 920.6" stroke="#8e8e8e" stroke-width="1.1" fill="none" stroke-linejoin="round"/>
<path d="M332.4 917.0L335.9 924.0L339.4 918.3" stroke="#8e8e8e" stroke-width="1.1" fill="none" stroke-linejoin="round"/>
<path d="M231.0 921.0L240.0 926.0L236.0 933.0L246.0 939.0" stroke="#8e8e8e" stroke-width="1.1" fill="none" stroke-linejoin="round"/>
<path d="M237 892.200L267.500 900.900" stroke="#ff3a6a" stroke-width="1.500" stroke-dasharray="1.600 1.600"/>
<path d="M238.600 893L267.500 901.300" stroke="#2828ff" stroke-width="1.300" stroke-dasharray="1.600 1.600"/>
<path d="M287 903L334.800 907.900" stroke="#ff1c1c" stroke-width="1.700" stroke-dasharray="2.400 .900"/>
<path d="M334.800 904V911.500" stroke="#ff2020" stroke-width="1.600"/><path d="M334.800 903v1.500M334.800 911.500v1.300" stroke="#3030ff" stroke-width="1.400"/>
<path d="M268 897.3v8.500" stroke="#ff2020" stroke-width="1.400"/><path d="M268 896.3v1.600" stroke="#20d020" stroke-width="1.400"/><path d="M268 905.3v1.500" stroke="#3030ff" stroke-width="1.400"/>
<path d="M270.5 897.8v8.500" stroke="#ff2020" stroke-width="1.400"/><path d="M270.5 896.8v1.600" stroke="#3030ff" stroke-width="1.400"/><path d="M270.5 905.8v1.500" stroke="#20d020" stroke-width="1.400"/>
<path d="M273 898.2v8.500" stroke="#ff2020" stroke-width="1.400"/><path d="M273 897.2v1.600" stroke="#20d020" stroke-width="1.400"/><path d="M273 906.2v1.500" stroke="#3030ff" stroke-width="1.400"/>
<path d="M275.5 898.6v8.500" stroke="#ff2020" stroke-width="1.400"/><path d="M275.5 897.6v1.600" stroke="#3030ff" stroke-width="1.400"/><path d="M275.5 906.6v1.500" stroke="#20d020" stroke-width="1.400"/>
<path d="M278 899.1v8.500" stroke="#ff2020" stroke-width="1.400"/><path d="M278 898.1v1.600" stroke="#20d020" stroke-width="1.400"/><path d="M278 907.1v1.500" stroke="#3030ff" stroke-width="1.400"/>
<path d="M280.5 899.5v8.500" stroke="#ff2020" stroke-width="1.400"/><path d="M280.5 898.5v1.600" stroke="#3030ff" stroke-width="1.400"/><path d="M280.5 907.5v1.500" stroke="#20d020" stroke-width="1.400"/>
<path d="M283 900.0v8.500" stroke="#ff2020" stroke-width="1.400"/><path d="M283 899.0v1.600" stroke="#20d020" stroke-width="1.400"/><path d="M283 908.0v1.500" stroke="#3030ff" stroke-width="1.400"/>
<path d="M286.5 900.4v8.500" stroke="#ff2020" stroke-width="1.400"/><path d="M286.5 899.4v1.600" stroke="#3030ff" stroke-width="1.400"/><path d="M286.5 908.4v1.500" stroke="#20d020" stroke-width="1.400"/>
<path d="M231.5 887v8.500" stroke="#ff2020" stroke-width="1.400"/><path d="M231.5 886v1.500" stroke="#20d020" stroke-width="1.300"/><path d="M231.5 895v1.500" stroke="#3030ff" stroke-width="1.300"/>
<path d="M233.5 888v8.500" stroke="#ff2020" stroke-width="1.400"/><path d="M233.5 887v1.500" stroke="#20d020" stroke-width="1.300"/><path d="M233.5 896v1.500" stroke="#3030ff" stroke-width="1.300"/>
<path d="M235.5 889v8.500" stroke="#ff2020" stroke-width="1.400"/><path d="M235.5 888v1.500" stroke="#20d020" stroke-width="1.300"/><path d="M235.5 897v1.500" stroke="#3030ff" stroke-width="1.300"/>
<rect x="234" y="928.700" width="8.300" height="8.300" fill="none" stroke="#f0f0f0" stroke-width="1.300"/>
<path d="M238 928.700V888.700" stroke="#d4d4d4" stroke-width="1.600"/><path d="M242.300 933.400H282.500" stroke="#e0e0e0" stroke-width="1.200"/>
<path d="M240 872.500l5.500 6.500l5.500-6.500M245.500 879v5.500" stroke="#e8e8e8" stroke-width="1" fill="none"/>
<path d="M287.500 920.500l11.500 11M299 920.500l-11.500 11" stroke="#e8e8e8" stroke-width="1"/>
<circle cx="957.500" cy="602.100" r="28.800" fill="none" stroke="#484e57" stroke-width="7.600"/>
<rect x="943.100" y="587.800" width="28.800" height="28.300" fill="#c1c4c9"/><rect x="946.500" y="591" width="22" height="22" fill="#b6bac0"/>
<rect x="935.900" y="649.200" width="43.200" height="15.800" rx="3.500" fill="#9295a1"/><path d="M967.300 654.200h7.500l-3.750 5z" fill="none" stroke="#6a6d78" stroke-width="1"/>
<rect x="971.500" y="687.700" width="28" height="191" rx="3" fill="#555a63"/>
<circle cx="985.500" cy="714.500" r="8.500" fill="none" stroke="#6c717a" stroke-width="1.300"/><circle cx="985.500" cy="714.500" r="4.500" fill="none" stroke="#6c717a" stroke-width="1.300"/><path d="M982 722.500l-1.500 2.500h10l-1.500-2.500" stroke="#6c717a" stroke-width="1.200" fill="none"/>
<path d="M978.500 757c-2-5-3-8-1.500-8.500 1.500-.5 2.500 2 3.500 5v-10c0-2 2.500-2 2.500 0v-2c0-2 2.500-2 2.500 0v2c0-2 2.500-2 2.500 0v3c0-2 2.500-2 2.500 0v9c0 4-2 6-5 7h-5z" stroke="#6c717a" stroke-width="1.200" fill="none"/>
<path d="M976 770l13 13M990 770l-14 14M976 770h4M976 770v4M990 770h-4M990 770v4M976 784h4M976 784v-4" stroke="#6c717a" stroke-width="1.200" fill="none"/><circle cx="991" cy="783" r="3.500" fill="#555a63" stroke="#6c717a" stroke-width="1.300"/><path d="M993.500 785.500l3 3" stroke="#6c717a" stroke-width="1.600"/>
<ellipse cx="985.500" cy="814" rx="9" ry="4" fill="none" stroke="#6c717a" stroke-width="1.200"/><path d="M985.500 803v20M982.500 806l3-3.500 3 3.500M982.500 820l3 3.500 3-3.500" stroke="#6c717a" stroke-width="1.200" fill="none"/><rect x="984" y="806" width="3" height="15" fill="#555a63" stroke="#6c717a" stroke-width="1"/>
<rect x="975.5" y="841" width="5" height="5" fill="none" stroke="#6c717a" stroke-width="1"/>
<rect x="983" y="841" width="5" height="5" fill="none" stroke="#6c717a" stroke-width="1"/>
<rect x="990.5" y="841" width="5" height="5" fill="none" stroke="#6c717a" stroke-width="1"/>
<rect x="975.500" y="848.500" width="14" height="11.500" fill="none" stroke="#6c717a" stroke-width="1.100"/><path d="M979.500 851l6 3.200-6 3.200z" fill="#6c717a"/>
<path d="M983.500 728.5h4l-2 2.200z" fill="#6c717a"/>
<path d="M983.500 795h4l-2 2.200z" fill="#6c717a"/>
<path d="M983.500 830h4l-2 2.200z" fill="#6c717a"/>
<circle cx="994.500" cy="691.500" r="2" fill="none" stroke="#6c717a" stroke-width=".9"/><rect x="992.500" y="872.500" width="4" height="4" fill="none" stroke="#6c717a" stroke-width=".9"/>
<rect x="383.500" y="921" width="51.500" height="23" fill="#2d333d" fill-opacity=".86"/>
<rect x="386" y="924" width="2" height="1" fill="#a4a8ae"/><rect x="389" y="924" width="2" height="1" fill="#a4a8ae"/>
<rect x="386" y="926" width="2" height="1" fill="#a4a8ae"/><rect x="389" y="926" width="2" height="1" fill="#a4a8ae"/>
<rect x="386" y="928" width="2" height="1" fill="#a4a8ae"/><rect x="389" y="928" width="2" height="1" fill="#a4a8ae"/>
<rect x="386" y="930" width="2" height="1" fill="#a4a8ae"/><rect x="389" y="930" width="2" height="1" fill="#a4a8ae"/>
<rect x="386" y="932" width="2" height="1" fill="#a4a8ae"/><rect x="389" y="932" width="2" height="1" fill="#a4a8ae"/>
<rect x="386" y="934" width="2" height="1" fill="#a4a8ae"/><rect x="389" y="934" width="2" height="1" fill="#a4a8ae"/>
<rect x="386" y="936" width="2" height="1" fill="#a4a8ae"/><rect x="389" y="936" width="2" height="1" fill="#a4a8ae"/>
<path d="M398.500 929.500l6.500 6.800M405 929.500l-6.500 6.800" stroke="#cfd2d6" stroke-width="1.800"/>
<path d="M418 938.500l7.500-7.500" stroke="#b4b7bc" stroke-width="2.600" stroke-linecap="round"/><path d="M424.300 932.600a3.600 3.600 0 0 1 1.200-6.500l-.3 3 2 1.400 2.600-1.300a3.600 3.600 0 0 1-5.500 3.400z" fill="#b4b7bc"/>
<rect x="435" y="921" width="411.500" height="23" fill="#d4d4d4" fill-opacity=".82"/>
<rect x="438.500" y="927.500" width="14.500" height="10" fill="none" stroke="#5a5a5a" stroke-width="1.400"/><rect x="438.500" y="927.500" width="14.500" height="2" fill="#5a5a5a"/><path d="M441 932l2 1.500-2 1.500M444.500 935.500h3.500" stroke="#5a5a5a" stroke-width="1" fill="none"/>
<path d="M455.800 931h5l-2.500 3z" fill="#555"/><path d="M837.500 933.500h6.500l-3.250-3.500z" fill="#666"/>
</svg>
<span class="cl" style="left:721.2px;top:5px;color:#c2c5ca;">北</span><span class="cl" style="left:721.2px;top:66.10000000000002px;color:#c2c5ca;">南</span><span class="cl" style="left:691px;top:34.89999999999998px;color:#c2c5ca;">西</span><span class="cl" style="left:751.8px;top:34.89999999999998px;color:#c2c5ca;">東</span><span class="cl" style="left:718.3px;top:31px;color:#c2c5ca;font-size:16.500px;font-weight:normal;color:#646970;line-height:16px">上</span><span class="abs" style="left:709.300px;top:90.800px;font-size:9.300px;color:#55585f;font-family:'Liberation Sans',sans-serif;letter-spacing:0">WCS</span><span class="abs" style="left:0.500px;top:1.500px;font-size:11px;color:#e4e6e9;white-space:nowrap;letter-spacing:.22px">[+][上][2D 線架構]</span><span class="abs" style="left:237.500px;top:363.500px;font-size:12px;font-style:italic;color:#6f6f6f;white-space:nowrap">鍵入指令</span>
</div>
<div id="cmdstrip"></div>
<div id="rt">
<svg width="30" height="787" viewBox="1004 160 30 787" style="left:0;top:0">
<rect x="1004" y="160" width="30" height="787" fill="#3b4453"/>
<rect x="1004" y="160" width="3" height="787" fill="#434b5c"/><rect x="1007" y="164" width="23" height="499" fill="#3a4251"/><rect x="1030" y="164" width="1.500" height="565" fill="#434b5c"/><rect x="1007" y="163" width="23" height="1" fill="#2f3642"/><rect x="1007" y="663" width="23" height="2" fill="#2f3642"/>
<rect x="1007" y="665" width="23" height="63.500" fill="#3a4251"/><rect x="1007" y="728.500" width="23" height="1" fill="#2f3642"/>
<rect x="1011" y="167" width="1" height="3" fill="#8b929d"/><rect x="1013" y="167" width="1" height="3" fill="#8b929d"/><rect x="1015" y="167" width="1" height="3" fill="#8b929d"/><rect x="1017" y="167" width="1" height="3" fill="#8b929d"/><rect x="1019" y="167" width="1" height="3" fill="#8b929d"/><rect x="1021" y="167" width="1" height="3" fill="#8b929d"/>
<rect x="1011" y="668" width="1" height="3" fill="#8b929d"/><rect x="1013" y="668" width="1" height="3" fill="#8b929d"/><rect x="1015" y="668" width="1" height="3" fill="#8b929d"/><rect x="1017" y="668" width="1" height="3" fill="#8b929d"/><rect x="1019" y="668" width="1" height="3" fill="#8b929d"/><rect x="1021" y="668" width="1" height="3" fill="#8b929d"/>
<path d="M1012 187.700V176h12" stroke="#dfe1e4" stroke-width="1.400" fill="none"/><path d="M1013.200 177.200h7.800c0 4-3.500 7.300-7.800 7.300z" fill="#d9dde3"/><path d="M1021 177.200c0 4-3.500 7.300-7.800 7.300" stroke="#4aa3e8" stroke-width="1.500" fill="none"/>
<path d="M1011.500 195V208.300H1025" stroke="#dfe1e4" stroke-width="1.100" stroke-dasharray="1.300 1.200" fill="none"/><path d="M1011.800 208L1021 199.600" stroke="#dfe1e4" stroke-width="1.300"/><path d="M1012.800 197.500c2.500.3 4.500 1.500 5.600 3.200l-5.600 5z" fill="#d9dde3"/><path d="M1012.500 196.500c2.800.3 5 1.800 6.200 4" stroke="#4aa3e8" stroke-width="1.500" fill="none"/>
<path d="M1014.300 215.500V227.500" stroke="#dfe1e4" stroke-width="1.100" stroke-dasharray="1.300 1.200"/><path d="M1015.500 218c2.500.5 4 2.500 4.200 5l-4.200-1.500z" fill="#d9dde3"/><path d="M1015.800 216.500c3 .8 4.800 3.500 4.800 7.300" stroke="#4aa3e8" stroke-width="1.600" fill="none"/><path d="M1015.800 221l4.200 5.500" stroke="#dfe1e4" stroke-width="1.200"/>
<path d="M1013.800 235.500V248" stroke="#dfe1e4" stroke-width="1.100" stroke-dasharray="1.300 1.200"/><path d="M1015 237.500l5.500.2-5.500 6.500z" fill="#d9dde3"/><path d="M1021.500 237l-7.200 8.500" stroke="#dfe1e4" stroke-width="1.200"/><path d="M1014.500 236.200c2.500-.4 5-.2 7 .8" stroke="#4aa3e8" stroke-width="1.500" fill="none"/>
<path d="M1011.500 254h8l4 4v3h-12z" fill="#dfe1e4"/><rect x="1011.500" y="254" width="3.500" height="13" fill="#b9bcc1"/><rect x="1016" y="254" width="3.500" height="13" fill="#eceded"/><path d="M1011.500 261.500h8" stroke="#3a4352" stroke-width="1"/><rect x="1018" y="261.800" width="6.300" height="6.300" fill="#3a4251" stroke="#dfe1e4" stroke-width="1.200"/><path d="M1021.150 261.800v6.300M1018 264.950h6.300" stroke="#dfe1e4" stroke-width="1"/>
<circle cx="1016.500" cy="279.500" r="6.300" fill="#4aa3e8"/><path d="M1013 276c2-1 3 0 4 1.500s3 1 3.500 3-2 3-3.500 3.500-3-2-4-3" fill="#a8d8fb"/><rect x="1019" y="281.800" width="6.300" height="6.300" fill="#3a4251" stroke="#dfe1e4" stroke-width="1.200"/><path d="M1022.150 281.800v6.300M1019 284.950h6.300" stroke="#dfe1e4" stroke-width="1"/>
<circle cx="1018" cy="300.500" r="7" fill="#4aa3e8"/><path d="M1011 300.500h14M1018 293.500v14M1013 296c3 2 7 2 10 0M1013 305c3-2 7-2 10 0" stroke="#c5e6fc" stroke-width=".9" fill="none"/><rect x="1014" y="300.500" width="3.500" height="3.500" fill="#fff" stroke="#333" stroke-width=".6"/><rect x="1019.500" y="297" width="3.500" height="3.500" fill="#fff" stroke="#333" stroke-width=".6"/>
<path d="M1016 314.9L1017.4 318.1L1020.6 319.5L1017.4 320.9L1016 324.1L1014.6 320.9L1011.4 319.5L1014.6 318.1Z" fill="#dfe1e4"/><circle cx="1016" cy="319.5" r="1.100" fill="#2f3642"/><rect x="1019.500" y="322.500" width="4" height="4" fill="#4aa3e8"/>
<path d="M1016 334.9L1017.4 338.1L1020.6 339.5L1017.4 340.9L1016 344.1L1014.6 340.9L1011.4 339.5L1014.6 338.1Z" fill="#dfe1e4"/><circle cx="1016" cy="339.5" r="1.100" fill="#2f3642"/><path d="M1019.500 347l2.700-7 2.700 7M1020.500 345h3.500" stroke="#dfe1e4" stroke-width="1.100" fill="none"/>
<path d="M1015.5 353.4L1016.9 356.6L1020.1 358L1016.9 359.4L1015.5 362.6L1014.1 359.4L1010.9 358L1014.1 356.6Z" fill="#dfe1e4"/><circle cx="1015.5" cy="358" r="1.100" fill="#2f3642"/><path d="M1019.5 357.5l0 9.5l2.375 -2.09l1.9 3.8l1.52 -0.76l-1.9 -3.8l3.135 -0.285z" fill="#fff"/>
<path d="M1015.5 373.4L1016.9 376.6L1020.1 378L1016.9 379.4L1015.5 382.6L1014.1 379.4L1010.9 378L1014.1 376.6Z" fill="#dfe1e4"/><circle cx="1015.5" cy="378" r="1.100" fill="#2f3642"/><circle cx="1021" cy="383" r="2.600" fill="none" stroke="#dfe1e4" stroke-width="1.200"/><path d="M1023 385l2.500 2.500" stroke="#dfe1e4" stroke-width="1.400"/>
<path d="M1013 393.500V406.500" stroke="#dfe1e4" stroke-width="1.200" stroke-dasharray="1.400 1.200"/><path d="M1017.500 394h6v6.500" stroke="#4aa3e8" stroke-width="2" fill="none"/><path d="M1015 404.500l7.500-8.500" stroke="#dfe1e4" stroke-width="1.200"/><path d="M1014.500 405.500l1-4.500 3.500 3z" fill="#dfe1e4"/><rect x="1018" y="396.500" width="3.500" height="3.500" fill="none" stroke="#b9bcc1" stroke-width=".9"/>
<path d="M1016.500 412.500V426.500" stroke="#4aa3e8" stroke-width="1.400"/><path d="M1010.800 414.300h10" stroke="#4aa3e8" stroke-width="2.200" stroke-dasharray="2.200 1"/><path d="M1021 413l3.500 3.500M1024 419.500l-2 2.500M1021 423.500l-2.500 2" stroke="#c4c8cd" stroke-width="1.300"/><path d="M1023.500 417.700h1.500M1018.500 420.500v3" stroke="#4aa3e8" stroke-width="1.300"/>
<rect x="1010.500" y="431.700" width="11" height="1.800" fill="#dfe1e4"/>
<path d="M1016.5 436.4L1017.9 439.6L1021.1 441L1017.9 442.4L1016.5 445.6L1015.1 442.4L1011.9 441L1015.1 439.6Z" fill="#dfe1e4"/><circle cx="1016.5" cy="441" r="1.100" fill="#2f3642"/><path d="M1010.5 444.5h8l-3 3.500v4.500l-2 -1v-3.500z" fill="#dfe1e4"/><path d="M1019.5 442.5l0 9.5l2.375 -2.09l1.9 3.8l1.52 -0.76l-1.9 -3.8l3.135 -0.285z" fill="#fff"/>
<rect x="1010.500" y="456.500" width="11" height="1.800" fill="#dfe1e4"/>
<path d="M1016.300 462.500v4M1016.300 473.500v4.300" stroke="#4aa3e8" stroke-width="1.300"/><path d="M1010.800 469.300h10" stroke="#4aa3e8" stroke-width="2.200" stroke-dasharray="2.200 1"/><path d="M1021.500 467.500l3 3M1024.500 472.500l-3 3M1019.500 477.300h-4.500" stroke="#c4c8cd" stroke-width="1.300"/><path d="M1024 471.500h1.500M1017 477.300h1.500" stroke="#4aa3e8" stroke-width="1.300"/>
<polygon points="1014.800,482.700 1018.800,485.700 1017.500,490.700 1012,490.700 1010.800,485.700" fill="#b9bcc1"/><path d="M1014.800 482.700l-.7 4.300 3.400 3.700M1010.800 485.700l3.300 1.300" stroke="#70757d" stroke-width=".8" fill="none"/><path d="M1015.700 491.700h6c2 0 3 1.200 3 2.800s-1 2.800-3 2.800h-2.500" stroke="#4aa3e8" stroke-width="1.500" fill="none" stroke-dasharray="2.600 1.200"/><path d="M1023.500 492.500c1.200.5 1.500 3 0 4" stroke="#c4c8cd" stroke-width="1.200" fill="none"/>
<path d="M1015.7 502.7L1017.1 505.90000000000003L1020.3000000000001 507.3L1017.1 508.7L1015.7 511.90000000000003L1014.3000000000001 508.7L1011.1 507.3L1014.3000000000001 505.90000000000003Z" fill="#dfe1e4"/><circle cx="1015.7" cy="507.3" r="1.100" fill="#2f3642"/><path d="M1016 511.700h6c2 0 3 1.200 3 2.800s-1 2.800-3 2.800h-2.500" stroke="#4aa3e8" stroke-width="1.500" fill="none" stroke-dasharray="2.600 1.200"/><path d="M1023.800 512.500c1.200.5 1.500 3 0 4" stroke="#c4c8cd" stroke-width="1.200" fill="none"/>
<rect x="1010.500" y="521.200" width="11" height="1.800" fill="#dfe1e4"/>
<path d="M1012.500 527V541.500h13" stroke="#dfe1e4" stroke-width="1.300" stroke-dasharray="1.600 1.300" fill="none"/><path d="M1014 531.500h5" stroke="#4aa3e8" stroke-width="1.600"/><path d="M1022.500 534v6" stroke="#4aa3e8" stroke-width="1.600"/><rect x="1020.500" y="530.500" width="2.500" height="2.500" fill="#dfe1e4"/>
<path d="M1014 562.500H1026" stroke="#dfe1e4" stroke-width="1.300" stroke-dasharray="1.600 1.300"/><path d="M1014 562V552" stroke="#dfe1e4" stroke-width="1.300" stroke-dasharray="1.600 1.300"/><path d="M1015 561.500l8.500-8.500" stroke="#4aa3e8" stroke-width="1.600"/><path d="M1024.500 554.500v7" stroke="#4aa3e8" stroke-width="1.800"/><path d="M1012 552.500l5.500-5.500M1014 546.500h4v4" stroke="#dfe1e4" stroke-width="1.300" fill="none"/><rect x="1023" y="551" width="2.500" height="2.500" fill="#dfe1e4"/>
<path d="M1012.500 567.500V582h13" stroke="#dfe1e4" stroke-width="1.300" stroke-dasharray="1.600 1.300" fill="none"/><path d="M1014 573h5M1014.500 580.500l6-6" stroke="#4aa3e8" stroke-width="1.600"/><rect x="1020.500" y="571" width="2.500" height="2.500" fill="#dfe1e4"/><path d="M1021.500 581l4-4M1023 576.500h3v3" stroke="#dfe1e4" stroke-width="1.100" fill="none"/>
<path d="M1012 592.500l5-5M1014 587h3.500v3.500" stroke="#dfe1e4" stroke-width="1.300" fill="none"/><path d="M1013 602l8.500-8.500" stroke="#4aa3e8" stroke-width="1.700"/><rect x="1021.500" y="590" width="2.500" height="2.500" fill="#dfe1e4"/><path d="M1015.500 603h10M1017.500 601l-2 2 2 2M1023.500 601l2 2-2 2" stroke="#dfe1e4" stroke-width="1.100" fill="none"/>
<circle cx="1018" cy="614.500" r="6.800" fill="none" stroke="#dfe1e4" stroke-width="1.400"/><path d="M1014 610.500l5 5M1014 610.500h3M1014 610.500v3" stroke="#dfe1e4" stroke-width="1.100" fill="none"/><path d="M1019.500 618.500l4.500-4 3 3-4.500 4z" fill="#f3c04a"/><path d="M1022.500 616l4.500-4" stroke="#fff" stroke-width="2"/>
<path d="M1012 638.500l9.500-9.500M1010.500 636l3.500 3.500M1020 627l3.500 3.500" stroke="#dfe1e4" stroke-width="1.400"/><path d="M1017 638l4.500-4 3 3-4.500 4z" fill="#f3c04a"/><path d="M1020.500 635.500l5-4.500" stroke="#fff" stroke-width="2"/>
<path d="M1012 661c.5-7 4-11.500 11-13" stroke="#dfe1e4" stroke-width="1.400" stroke-dasharray="2.600 1.600" fill="none"/><rect x="1019" y="652" width="7.500" height="9.500" fill="#fff"/><path d="M1020.500 654.500h4.500M1020.500 657h4.500M1020.500 659.500h4.500" stroke="#4aa3e8" stroke-width="1.300"/>
<path d="M1017 672.4L1018.4 675.6L1021.6 677L1018.4 678.4L1017 681.6L1015.6 678.4L1012.4 677L1015.6 675.6Z" fill="#dfe1e4"/><circle cx="1017" cy="677" r="1.100" fill="#2f3642"/><path d="M1011 681h8l-3 3.500v4.500l-2 -1v-3.500z" fill="#dfe1e4"/><path d="M1019.5 678.5l0 9.5l2.375 -2.09l1.9 3.8l1.52 -0.76l-1.9 -3.8l3.135 -0.285z" fill="#fff"/>
<rect x="1011.500" y="692.500" width="4" height="5.500" fill="#dfe1e4"/><rect x="1016.500" y="692.500" width="4" height="5.500" fill="#dfe1e4"/><path d="M1021.500 693.500l3.500 3.500h-3.500z" fill="#dfe1e4"/><path d="M1011 699.5h8l-3 3.500v4.500l-2 -1v-3.500z" fill="#dfe1e4"/><rect x="1019.500" y="700.500" width="6.500" height="6.500" fill="none" stroke="#dfe1e4" stroke-width="1.100"/><path d="M1022.700 700.500v6.500M1019.500 703.700h6.500" stroke="#dfe1e4" stroke-width=".9"/>
<path d="M1017.5 709.9L1018.9 713.1L1022.1 714.5L1018.9 715.9L1017.5 719.1L1016.1 715.9L1012.9 714.5L1016.1 713.1Z" fill="#dfe1e4"/><circle cx="1017.5" cy="714.5" r="1.100" fill="#2f3642"/><path d="M1011 718.5h8l-3 3.500v4.500l-2 -1v-3.500z" fill="#dfe1e4"/><rect x="1020.500" y="720" width="5" height="1.800" fill="#4aa3e8"/><rect x="1020.500" y="723" width="5" height="1.800" fill="#4aa3e8"/>
</svg>
</div>
<div id="status">
<svg width="1034" height="27" viewBox="0 947 1034 27" style="left:0;top:0">
<polygon points="10,970 19.500,949 63,949 54,970" fill="#3b4453"/>
<path d="M118 968l6.500-17" stroke="#454e5d" stroke-width="1.200"/>
<path d="M180 968l6.500-17" stroke="#454e5d" stroke-width="1.200"/>
<path d="M216 968l6.500-17" stroke="#454e5d" stroke-width="1.200"/>
<path d="M195 959.300h11M200.500 954.500v9.600" stroke="#f2f3f4" stroke-width="2"/>
<rect x="457.5" y="949.500" width="26.5" height="21.800" fill="#2e3643"/>
<rect x="487.2" y="949.500" width="57.1" height="21.800" fill="#2e3643"/>
<path d="M491 957h13M491 962.500h13M495.300 953v13M500.300 953v13" stroke="#e3e5e8" stroke-width="1.300"/>
<rect x="514.3" y="954.3" width="1.800" height="1.800" fill="#e3e5e8"/>
<rect x="514.3" y="958.9" width="1.800" height="1.800" fill="#e3e5e8"/>
<rect x="514.3" y="963.5" width="1.800" height="1.800" fill="#e3e5e8"/>
<rect x="518.9" y="954.3" width="1.800" height="1.800" fill="#e3e5e8"/>
<rect x="518.9" y="958.9" width="1.800" height="1.800" fill="#e3e5e8"/>
<rect x="518.9" y="963.5" width="1.800" height="1.800" fill="#e3e5e8"/>
<rect x="523.5" y="954.3" width="1.800" height="1.800" fill="#e3e5e8"/>
<rect x="523.5" y="958.9" width="1.800" height="1.800" fill="#e3e5e8"/>
<rect x="523.5" y="963.5" width="1.800" height="1.800" fill="#e3e5e8"/>
<path d="M534.5 959.0h6l-3 3.300z" fill="#d5d8dc"/>
<rect x="547.6" y="949.500" width="92.2" height="21.800" fill="#2e3643"/>
<path d="M551.500 953v13.500h13.500M551.500 961.500h4.500v5" stroke="#e3e5e8" stroke-width="1.300" fill="none"/>
<rect x="570.200" y="949.500" width="19.800" height="21.800" fill="#4b8bd2"/><circle cx="579.500" cy="961.500" r="5.800" fill="none" stroke="#fff" stroke-width="1.400"/><path d="M579.500 961.500h8M579.500 961.500l6.500-7" stroke="#fff" stroke-width="1.300"/>
<path d="M595.4 959.0h6l-3 3.300z" fill="#d5d8dc"/>
<path d="M616 953v15" stroke="#3fc060" stroke-width="1.300"/><path d="M610.500 954l11 12.500" stroke="#e05050" stroke-width="1.300"/><circle cx="616" cy="960.300" r="1.300" fill="#fff"/>
<path d="M631.3 959.0h6l-3 3.300z" fill="#d5d8dc"/>
<rect x="642.4" y="949.500" width="57.6" height="21.800" fill="#2e3643"/>
<rect x="642.900" y="949.500" width="19.600" height="21.800" fill="#4b8bd2"/><path d="M646.500 966.500h13M646.500 966.500l11-11" stroke="#fff" stroke-width="1.500" fill="none"/><rect x="650.500" y="960.500" width="3" height="3" fill="#fff"/>
<rect x="665" y="949.500" width="20" height="21.800" fill="#4b8bd2"/><rect x="669.500" y="955.500" width="12" height="11" fill="none" stroke="#fff" stroke-width="1.400"/><rect x="667.500" y="953.500" width="4" height="4" fill="#4b8bd2" stroke="#fff" stroke-width="1.100"/>
<path d="M689.6 959.0h6l-3 3.300z" fill="#d5d8dc"/>
<rect x="702.6" y="949.500" width="108.8" height="21.800" fill="#2e3643"/>
<rect x="703.300" y="949.500" width="19.300" height="21.800" fill="#4b8bd2"/><path d="M712 953l2.200 7.500 4.800 6.500-2 .8-5-4.500-5 4.500-2-.8 4.800-6.500z" fill="#fff"/><circle cx="718.500" cy="955" r="2" fill="none" stroke="#fff" stroke-width="1"/>
<path d="M735 953l2.200 7.500 4.800 6.500-2 .8-5-4.500-5 4.500-2-.8 4.800-6.500z" fill="#e3e5e8"/><path d="M741 952l-2.500 3.500h2.500l-2 3.500" stroke="#e3e5e8" stroke-width="1.100" fill="none"/>
<path d="M756.5 953l2.200 7.500 4.800 6.500-2 .8-5-4.500-5 4.500-2-.8 4.800-6.500z" fill="#e3e5e8"/>
<path d="M802.4 959.0h6l-3 3.300z" fill="#d5d8dc"/>
<rect x="814.7" y="949.500" width="36.6" height="21.800" fill="#2e3643"/>
<circle cx="825.500" cy="960.500" r="3.800" fill="none" stroke="#e3e5e8" stroke-width="2.600"/><g stroke="#e3e5e8" stroke-width="2.400"><path d="M825.500 953v2.500M825.500 965.500v2.500M818 960.500h2.500M830.500 960.500h2.500M820.200 955.200l1.800 1.800M829 964l1.800 1.800M820.200 965.800l1.800-1.800M829 957l1.800-1.800"/></g>
<path d="M840.7 959.0h6l-3 3.300z" fill="#d5d8dc"/>
<rect x="853" y="949.500" width="21.0" height="21.800" fill="#2e3643"/>
<path d="M855.700 960.500h15M863.200 953v15" stroke="#f2f3f4" stroke-width="1.800"/>
<rect x="876.3" y="949.500" width="21.7" height="21.800" fill="#2e3643"/>
<rect x="880" y="953" width="5.500" height="5.500" fill="none" stroke="#e3e5e8" stroke-width="1.200"/><circle cx="891" cy="960" r="3" fill="none" stroke="#e3e5e8" stroke-width="1.200"/><path d="M883 968.500l3-5.500 3 5.500z" fill="none" stroke="#e3e5e8" stroke-width="1.200"/>
<rect x="901.9" y="949.500" width="59.2" height="21.800" fill="#2e3643"/>
<path d="M906 962.500l7.300-3.800 7.300 3.800-7.300 3.800z" fill="#e9eaec"/><path d="M906 962.500v2.500l7.300 3.800 7.300-3.800v-2.500l-7.300 3.800z" fill="#b9bcc1"/><path d="M906.500 960l6.800-3.600 6.800 3.600-6.800 3.600z" fill="#3f97e4"/><path d="M907.500 955.500c2-3.500 9-3.500 11.500 0" stroke="#e3e5e8" stroke-width="1" stroke-dasharray="1.300 1.300" fill="none"/>
<rect x="963.5" y="949.500" width="20.9" height="21.800" fill="#2e3643"/>
<rect x="969.500" y="955" width="10" height="9" fill="#3f83cc"/><path d="M969.500 952v16M966.500 955.500h13" stroke="#8fc4f4" stroke-width="1.200"/><rect x="966.500" y="962.500" width="6" height="5" fill="#f0b030"/><path d="M973 964.500l3 3 6-6.500" stroke="#3cc050" stroke-width="2.200" fill="none"/>
<rect x="987" y="949.500" width="20.7" height="21.800" fill="#2e3643"/>
<rect x="991.300" y="954.500" width="13.500" height="11.500" fill="none" stroke="#e3e5e8" stroke-width="1.300"/><path d="M994 963.500l3-3M994 963.500v-2.500M994 963.500h2.500M1002 957l-3 3M1002 957v2.500M1002 957h-2.500" stroke="#e3e5e8" stroke-width="1.100" fill="none"/>
<path d="M1012 955.500h15.700M1012 960.500h15.700M1012 965.500h15.700" stroke="#f2f3f4" stroke-width="1.900"/>
</svg>
<span class="abs" style="left:26px;top:7.2999999999999545px;font-size:11px;white-space:nowrap;color:#d3d6db;color:#fff">模型</span><span class="abs" style="left:69px;top:7.2999999999999545px;font-size:11px;white-space:nowrap;color:#d3d6db;letter-spacing:.05px">Layout1</span><span class="abs" style="left:131.3px;top:7.2999999999999545px;font-size:11px;white-space:nowrap;color:#d3d6db;letter-spacing:.05px">Layout2</span><span class="abs" style="left:460.3px;top:7.5px;font-size:11px;white-space:nowrap;color:#d3d6db;color:#f0f1f3">模型</span><span class="abs" style="left:771.5px;top:7.5px;font-size:11px;white-space:nowrap;color:#d3d6db;color:#f0f1f3">1:500</span><span class="abs" style="left:929px;top:7.5px;font-size:11px;white-space:nowrap;color:#d3d6db;color:#f0f1f3">3.500</span>
</div>
<div id="ledge"></div>
</body>
</html>
